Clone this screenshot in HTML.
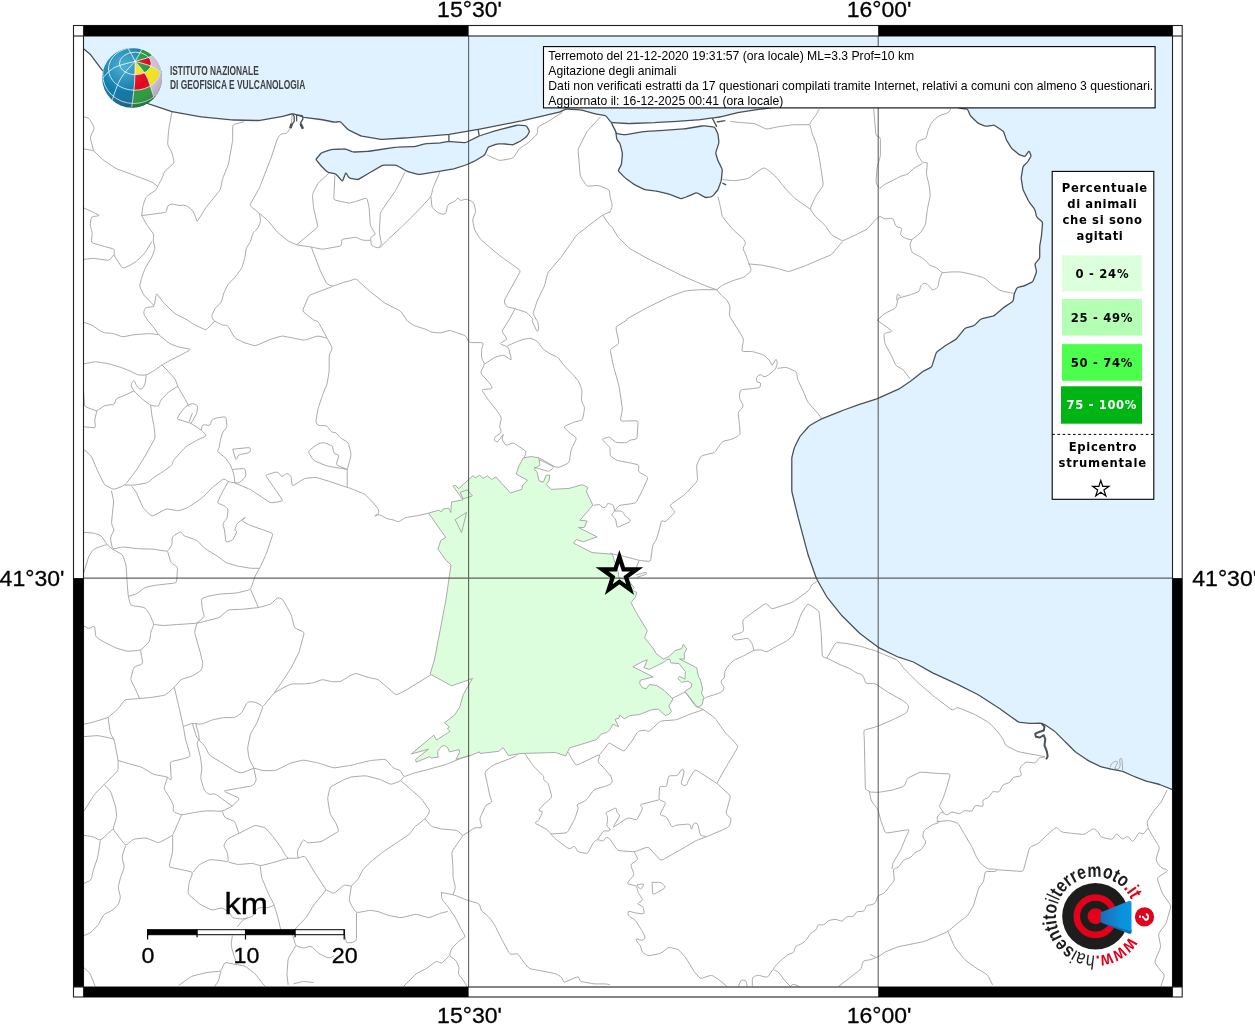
<!DOCTYPE html>
<html lang="it"><head><meta charset="utf-8"><title>Hai sentito il terremoto - Agitazione degli animali</title>
<style>html,body{margin:0;padding:0;background:#fff}body{width:1255px;height:1024px;overflow:hidden}svg{display:block;will-change:transform}text{font-family:"Liberation Sans",sans-serif;fill:#000}.dj{font-family:"DejaVu Sans",sans-serif;font-weight:bold}</style></head><body>
<svg width="1255" height="1024" viewBox="0 0 1255 1024">
<rect width="1255" height="1024" fill="#fff"/>
<defs><clipPath id="mapclip"><rect x="83.5" y="36" width="1089" height="951"/></clipPath><linearGradient id="bl" x1="0" x2="1" y1="0" y2="0"><stop offset="0" stop-color="#1c6cb4"/><stop offset="0.7" stop-color="#0a92dc"/><stop offset="1" stop-color="#0a96e0"/></linearGradient><radialGradient id="gl" cx="0.35" cy="0.3" r="0.75"><stop offset="0" stop-color="#2aa0c8"/><stop offset="0.6" stop-color="#0f79a8"/><stop offset="1" stop-color="#0a5c86"/></radialGradient><radialGradient id="gsh" cx="0.38" cy="0.3" r="0.8"><stop offset="0" stop-color="#fff" stop-opacity="0.18"/><stop offset="0.55" stop-color="#fff" stop-opacity="0"/><stop offset="1" stop-color="#000" stop-opacity="0.28"/></radialGradient><clipPath id="globeclip"><circle cx="132.3" cy="77.7" r="29.8"/></clipPath></defs>
<g clip-path="url(#mapclip)">
<path d="M83.5 36.0 L83.5 48.8 L90.2 54.2 L101.7 69.5 L120.0 88.0 L148.8 103.9 L171.8 111.6 L199.8 116.7 L233.0 120.0 L258.5 120.5 L281.4 116.7 L292.9 113.6 L304.4 117.5 L322.2 119.7 L335.0 122.3 L340.0 121.3 L347.7 129.4 L360.5 135.8 L380.9 139.4 L405.5 137.9 L447.6 134.6 L478.2 129.5 L520.2 121.1 L558.5 112.4 L566.1 109.1 L581.4 109.9 L596.7 114.2 L605.6 115.5 L611.2 122.5 L629.2 123.6 L656.1 122.5 L678.6 121.3 L698.8 119.8 L712.3 118.0 L721.2 116.8 L739.2 112.3 L761.7 109.0 L800.0 104.0 L880.0 100.0 L940.0 103.0 L962.8 108.8 L967.4 108.8 L970.3 115.6 L978.1 123.4 L986.0 126.4 L993.8 125.0 L1003.5 131.3 L1006.5 140.0 L1011.3 147.9 L1019.2 154.7 L1025.0 156.7 L1028.9 150.8 L1031.3 155.7 L1028.0 161.5 L1023.1 166.4 L1021.1 178.1 L1023.1 189.9 L1028.9 201.6 L1034.8 209.4 L1036.7 217.2 L1042.6 222.1 L1041.6 234.8 L1039.7 246.5 L1039.7 258.2 L1034.8 264.1 L1036.7 271.9 L1032.8 281.7 L1025.0 285.6 L1017.2 287.5 L1014.3 293.4 L1013.2 301.2 L1003.1 307.9 L994.2 315.7 L980.8 319.0 L974.1 325.7 L965.2 328.0 L956.3 339.1 L945.1 345.8 L936.2 352.5 L931.7 367.0 L922.8 371.5 L911.6 380.4 L900.5 388.2 L878.2 398.3 L858.1 404.9 L842.5 410.5 L820.2 419.4 L809.0 426.1 L800.1 436.2 L794.5 447.3 L791.8 457.4 L791.8 491.5 L798.7 519.7 L808.1 554.8 L816.3 578.2 L826.9 597.0 L840.9 614.6 L859.7 633.3 L878.4 647.4 L897.2 656.7 L913.4 662.0 L933.5 673.3 L955.8 683.5 L978.1 694.7 L1000.0 708.8 L1009.4 715.6 L1018.8 722.3 L1031.3 723.4 L1041.4 723.1 L1045.3 725.0 L1054.7 731.3 L1065.6 742.2 L1075.0 751.6 L1087.5 760.2 L1100.0 766.4 L1109.4 768.8 L1121.9 771.1 L1134.4 776.6 L1146.9 781.3 L1159.4 784.4 L1172.5 789.6 L1172.5 36.0Z" fill="#e0f2ff"/>
<path d="M315.8 159.5 L321.4 152.8 L331.5 149.4 L345.0 148.9 L353.5 152.1 L369.2 151.2 L396.1 147.2 L414.1 146.7 L425.3 143.8 L438.8 143.1 L448.9 141.5 L465.7 142.7 L479.2 135.9 L497.2 130.3 L517.4 125.1 L526.4 125.8 L529.7 131.4 L526.4 137.0 L519.6 141.5 L512.9 144.9 L503.9 143.8 L497.2 143.8 L488.2 147.2 L484.8 155.0 L474.7 161.1 L465.7 165.1 L452.3 169.2 L438.8 171.4 L418.6 174.5 L407.4 171.4 L396.1 165.1 L382.7 165.1 L369.2 173.0 L358.0 179.7 L349.0 178.0 L345.8 172.5 L342.5 181.5 L336.0 174.1 L327.0 171.9 L321.4 166.2Z" fill="#e0f2ff"/>
<path d="M611.2 122.5 L615.7 131.4 L616.8 133.7 L624.7 134.8 L644.9 131.4 L665.1 130.3 L685.3 128.7 L703.3 125.8 L714.5 126.9 L717.9 133.7 L719.0 142.7 L715.6 152.8 L717.9 160.6 L722.4 169.6 L721.2 180.8 L717.9 189.8 L712.3 196.5 L705.5 197.7 L696.6 192.5 L687.6 196.5 L680.8 198.8 L669.6 194.3 L656.1 190.9 L644.9 189.8 L633.7 184.2 L624.7 177.5 L618.0 170.7 L621.3 165.1 L622.5 153.9 L620.2 143.8 L616.8 139.3 L615.7 131.4Z" fill="#e0f2ff"/>
<path d="M428.6 513.1 L438.6 510.2 L441.5 511.7 L442.9 509.1 L448.7 508.1 L450.8 512.4 L451.6 501.9 L463.0 499.9 L453.0 486.1 L455.1 485.1 L458.7 488.7 L468.8 479.4 L473.1 475.5 L475.2 478.0 L479.5 475.1 L483.1 478.4 L487.4 475.8 L491.7 479.4 L496.0 477.0 L510.4 493.0 L521.8 489.4 L522.6 485.1 L527.6 480.4 L516.1 474.1 L519.0 465.8 L523.3 457.9 L531.2 456.5 L539.0 457.9 L539.8 465.1 L534.0 469.4 L536.9 471.5 L539.0 480.8 L543.3 482.3 L546.2 475.1 L549.8 475.1 L549.1 480.8 L546.2 484.4 L551.2 489.4 L569.2 488.4 L582.1 484.7 L587.8 487.3 L586.4 491.6 L592.8 505.2 L579.9 520.3 L587.1 521.0 L584.2 527.5 L578.5 527.5 L597.1 536.8 L583.5 541.8 L576.3 539.6 L573.5 543.2 L582.1 547.5 L592.1 552.6 L612.6 554.2 L613.7 558.7 L618.0 571.6 L619.1 578.0 L628.0 580.0 L634.1 587.7 L632.0 590.0 L636.8 592.5 L635.2 597.4 L630.9 602.7 L637.4 614.5 L640.8 620.0 L647.3 630.7 L644.6 637.7 L653.7 649.0 L655.9 653.3 L663.4 659.2 L668.8 656.5 L675.2 650.6 L681.7 648.5 L683.3 644.2 L686.8 649.0 L684.3 653.3 L684.3 659.2 L679.5 658.9 L696.7 667.8 L698.3 675.9 L700.5 680.2 L702.6 688.8 L701.5 693.1 L703.7 697.4 L702.1 704.9 L697.2 707.6 L694.5 704.9 L684.9 691.4 L691.3 687.1 L691.9 683.9 L688.1 681.2 L681.7 682.3 L677.9 678.6 L679.5 676.4 L684.9 679.1 L685.4 671.6 L679.0 663.5 L670.9 663.0 L669.8 659.2 L666.6 659.8 L664.5 661.9 L658.0 665.1 L649.4 669.4 L644.0 667.8 L647.3 659.8 L643.0 661.4 L632.8 666.7 L653.2 676.9 L640.3 680.2 L639.7 683.4 L642.4 687.7 L646.2 688.8 L649.4 684.5 L656.9 685.5 L664.5 690.9 L673.1 699.0 L668.8 705.9 L671.4 711.3 L668.8 714.5 L665.0 715.4 L658.6 709.2 L651.6 709.7 L639.7 714.5 L630.1 715.6 L624.2 718.8 L619.9 715.1 L618.8 718.3 L615.0 719.4 L618.8 726.9 L612.9 724.2 L609.7 730.0 L606.5 732.6 L601.4 733.9 L596.3 739.7 L569.6 747.9 L565.7 756.0 L555.5 752.5 L520.0 753.5 L508.5 755.6 L503.1 747.6 L498.8 751.3 L480.0 753.5 L479.5 751.9 L468.8 756.2 L455.9 759.4 L459.6 752.4 L459.1 749.7 L449.4 751.9 L447.8 748.1 L444.6 745.4 L441.4 746.5 L437.6 751.3 L438.1 757.2 L431.2 758.0 L429.5 756.7 L416.1 762.1 L415.6 759.4 L428.5 749.2 L411.3 754.0 L433.8 735.2 L436.5 740.0 L450.0 731.4 L447.3 728.8 L449.4 727.1 L444.6 722.8 L454.8 714.8 L459.6 707.3 L463.4 694.4 L468.8 684.7 L472.5 678.3 L468.8 679.9 L451.6 685.8 L430.1 674.0 L434.4 660.0 L442.1 620.0 L445.9 600.0 L448.4 582.8 L451.0 564.9 L445.8 560.0 L437.9 549.0 L440.8 540.4 L445.8 537.5Z" fill="#dcfedc"/>
<g fill="none" stroke="#a2a2a2" stroke-width="0.9" stroke-linejoin="round">
<path d="M428.6 513.1 L438.6 510.2 L441.5 511.7 L442.9 509.1 L448.7 508.1 L450.8 512.4 L451.6 501.9 L463.0 499.9 L453.0 486.1 L455.1 485.1 L458.7 488.7 L468.8 479.4 L473.1 475.5 L475.2 478.0 L479.5 475.1 L483.1 478.4 L487.4 475.8 L491.7 479.4 L496.0 477.0 L510.4 493.0 L521.8 489.4 L522.6 485.1 L527.6 480.4 L516.1 474.1 L519.0 465.8 L523.3 457.9 L531.2 456.5 L539.0 457.9 L539.8 465.1 L534.0 469.4 L536.9 471.5 L539.0 480.8 L543.3 482.3 L546.2 475.1 L549.8 475.1 L549.1 480.8 L546.2 484.4 L551.2 489.4 L569.2 488.4 L582.1 484.7 L587.8 487.3 L586.4 491.6 L592.8 505.2 L579.9 520.3 L587.1 521.0 L584.2 527.5 L578.5 527.5 L597.1 536.8 L583.5 541.8 L576.3 539.6 L573.5 543.2 L582.1 547.5 L592.1 552.6 L612.6 554.2 L613.7 558.7 L618.0 571.6 L619.1 578.0 L628.0 580.0 L634.1 587.7 L632.0 590.0 L636.8 592.5 L635.2 597.4 L630.9 602.7 L637.4 614.5 L640.8 620.0 L647.3 630.7 L644.6 637.7 L653.7 649.0 L655.9 653.3 L663.4 659.2 L668.8 656.5 L675.2 650.6 L681.7 648.5 L683.3 644.2 L686.8 649.0 L684.3 653.3 L684.3 659.2 L679.5 658.9 L696.7 667.8 L698.3 675.9 L700.5 680.2 L702.6 688.8 L701.5 693.1 L703.7 697.4 L702.1 704.9 L697.2 707.6 L694.5 704.9 L684.9 691.4 L691.3 687.1 L691.9 683.9 L688.1 681.2 L681.7 682.3 L677.9 678.6 L679.5 676.4 L684.9 679.1 L685.4 671.6 L679.0 663.5 L670.9 663.0 L669.8 659.2 L666.6 659.8 L664.5 661.9 L658.0 665.1 L649.4 669.4 L644.0 667.8 L647.3 659.8 L643.0 661.4 L632.8 666.7 L653.2 676.9 L640.3 680.2 L639.7 683.4 L642.4 687.7 L646.2 688.8 L649.4 684.5 L656.9 685.5 L664.5 690.9 L673.1 699.0 L668.8 705.9 L671.4 711.3 L668.8 714.5 L665.0 715.4 L658.6 709.2 L651.6 709.7 L639.7 714.5 L630.1 715.6 L624.2 718.8 L619.9 715.1 L618.8 718.3 L615.0 719.4 L618.8 726.9 L612.9 724.2 L609.7 730.0 L606.5 732.6 L601.4 733.9 L596.3 739.7 L569.6 747.9 L565.7 756.0 L555.5 752.5 L520.0 753.5 L508.5 755.6 L503.1 747.6 L498.8 751.3 L480.0 753.5 L479.5 751.9 L468.8 756.2 L455.9 759.4 L459.6 752.4 L459.1 749.7 L449.4 751.9 L447.8 748.1 L444.6 745.4 L441.4 746.5 L437.6 751.3 L438.1 757.2 L431.2 758.0 L429.5 756.7 L416.1 762.1 L415.6 759.4 L428.5 749.2 L411.3 754.0 L433.8 735.2 L436.5 740.0 L450.0 731.4 L447.3 728.8 L449.4 727.1 L444.6 722.8 L454.8 714.8 L459.6 707.3 L463.4 694.4 L468.8 684.7 L472.5 678.3 L468.8 679.9 L451.6 685.8 L430.1 674.0 L434.4 660.0 L442.1 620.0 L445.9 600.0 L448.4 582.8 L451.0 564.9 L445.8 560.0 L437.9 549.0 L440.8 540.4 L445.8 537.5Z"/>
<path d="M460.2 492.3 L467.3 489.9 L472.4 495.9 L463.0 498.8Z"/>
<path d="M455.1 519.6 L466.6 512.4 L461.6 532.5Z"/>
<path d="M172.1 111.2 L169.1 127.0 Q168.7 129.2 168.5 131.4 L167.7 142.7 Q167.6 144.9 168.7 146.8 L171.0 150.9 Q172.1 152.8 172.5 154.9 L173.8 160.7 Q174.3 162.9 172.7 164.3 L165.8 170.4 Q164.2 171.9 163.5 173.9 L162.7 176.5 Q162.0 178.6 160.9 180.5 L158.6 184.5 Q157.5 186.4 156.9 188.1 L156.9 188.1 Q156.3 189.8 154.5 191.0 L148.1 195.3 Q146.2 196.6 145.5 198.6 L143.6 203.5 Q142.9 205.5 142.6 207.7 L141.7 215.6"/>
<path d="M141.7 215.6 L164.3 212.6 Q166.4 212.3 166.8 210.1 L167.2 207.7 Q167.6 205.5 169.6 204.7 L170.0 204.6 Q172.1 203.7 174.2 204.3 L176.7 205.0 Q178.8 205.5 181.0 205.4 L183.3 205.2 Q185.5 205.1 187.3 206.4 L190.5 208.7 Q192.3 210.0 193.3 212.0 L194.7 214.8 Q195.6 216.8 196.1 218.9 L196.3 220.2 Q196.8 222.4 197.9 220.5 L204.6 209.7 Q205.7 207.8 207.1 206.1 L218.9 191.5 Q220.3 189.8 220.8 187.7 L222.1 180.7 Q222.6 178.6 223.4 176.6 L227.3 167.1 Q228.2 165.1 228.6 163.0 L232.3 142.6 Q232.7 140.4 232.7 138.2 L232.7 126.9 Q232.7 124.7 234.8 124.1 L243.9 121.8"/>
<path d="M83.4 148.9 L91.3 150.2 Q93.5 150.5 95.0 152.1 L100.9 157.9 Q102.5 159.5 104.3 160.7 L114.1 167.3 Q115.9 168.5 118.0 169.3 L131.8 174.4 Q133.9 175.2 135.9 176.0 L149.8 181.2 Q151.9 182.0 153.6 183.3 L157.5 186.4"/>
<path d="M83.4 116.8 L86.8 117.5 Q89.0 118.0 90.0 119.9 L93.5 126.1 Q94.6 128.1 93.6 130.0 L91.1 135.1 Q90.1 137.0 90.6 139.2 L93.5 150.5"/>
<path d="M141.7 215.6 L146.3 223.8 Q147.4 225.7 148.7 227.5 L152.8 233.0 Q154.1 234.7 153.7 236.9 L153.4 238.2 Q153.0 240.3 153.6 242.5 L154.6 246.1 Q155.2 248.2 154.4 250.3 L152.6 255.1 Q151.9 257.2 150.7 259.1 L146.2 266.5 Q145.1 268.4 144.3 270.5 L142.5 275.3 Q141.7 277.4 141.2 279.5 L140.0 284.2 Q139.5 286.4 140.5 288.3 L143.0 293.4 Q144.0 295.3 145.5 296.9 L150.3 301.7 Q151.9 303.2 153.0 304.9 L153.0 304.9 Q154.1 306.6 154.5 304.4 L156.0 295.3 Q156.3 293.1 157.7 294.9 L161.8 300.3 Q163.1 302.1 164.6 303.6 L172.8 311.8 Q174.3 313.3 176.3 314.3 L187.4 320.0"/>
<path d="M154.1 306.6 L147.3 307.4 Q145.1 307.7 144.4 309.8 L144.0 311.2 Q143.3 313.3 144.5 315.2 L147.4 320.0"/>
<path d="M83.4 207.8 L91.5 211.4 Q93.5 212.3 95.4 213.3 L98.2 214.7 Q100.2 215.6 98.0 215.9 L93.4 216.5 Q91.2 216.8 91.0 218.9 L90.4 223.6 Q90.1 225.7 90.8 227.8 L91.7 230.4 Q92.3 232.5 92.1 234.7 L91.5 240.4 Q91.2 242.6 93.3 243.2 L100.3 245.3 Q102.5 245.9 104.6 246.5 L112.7 248.7 Q114.8 249.3 114.4 251.5 L114.1 252.8 Q113.7 254.9 114.9 256.8 L121.4 266.6 Q122.7 268.4 124.7 267.6 L126.2 267.0 Q128.3 266.2 130.2 265.1 L134.2 262.8 Q136.1 261.7 137.7 260.1 L143.6 254.2 Q145.1 252.7 146.2 250.8 L151.9 241.5"/>
<path d="M83.4 259.4 L91.3 258.5 Q93.5 258.3 95.7 258.6 L107.0 260.2 Q109.2 260.5 110.6 258.8 L113.7 254.9"/>
<path d="M292.2 114.6 L291.3 124.8 Q291.1 126.9 289.8 128.8 L287.8 131.9 Q286.6 133.7 284.4 133.7 L283.2 133.7 Q281.0 133.7 279.6 135.4 L278.9 136.4 Q277.6 138.2 276.9 140.3 L271.6 156.3 Q270.9 158.4 270.1 160.4 L260.4 185.5 Q259.6 187.6 258.6 189.5 L250.6 203.6 Q249.5 205.5 251.3 206.9 L257.9 212.0 Q259.6 213.4 259.9 215.6 L260.4 219.1 Q260.8 221.3 259.9 223.3 L258.3 227.1 Q257.4 229.1 255.6 230.4 L254.7 231.2 Q252.9 232.5 252.4 234.6 L251.2 239.3 Q250.6 241.5 249.4 243.3 L247.4 246.4 Q246.2 248.2 245.9 250.4 L245.3 255.0 Q245.0 257.2 244.4 259.3 L242.3 266.3 Q241.7 268.4 240.3 270.2 L236.3 275.6 Q234.9 277.4 233.4 278.9 L229.8 282.6 Q228.2 284.1 227.2 286.1 L224.7 291.1 Q223.7 293.1 223.2 295.2 L222.0 299.9 Q221.5 302.1 219.9 303.6 L216.3 307.3 Q214.7 308.8 213.9 310.8 L212.2 314.7 Q211.4 316.7 212.5 318.3 L213.6 320.0"/>
<path d="M259.6 213.4 L267.0 219.8 Q268.6 221.3 270.0 223.0 L276.2 230.8 Q277.6 232.5 279.3 233.9 L287.1 240.1 Q288.8 241.5 290.8 242.3 L294.7 244.0 Q296.7 244.8 298.9 245.2 L309.1 246.7 Q311.3 247.1 313.4 247.5 L320.3 248.9 Q322.5 249.3 324.7 248.9 L339.4 246.3 Q341.6 245.9 341.6 243.7 L341.6 241.4 Q341.6 239.2 343.8 238.9 L350.0 238.1"/>
<path d="M296.7 244.8 L316.3 228.3 Q318.0 226.9 317.5 224.7 L314.0 209.9 Q313.5 207.8 313.3 205.6 L312.6 196.5 Q312.4 194.3 313.4 192.3 L317.0 185.0 Q318.0 183.1 319.6 181.6 L329.2 173.0"/>
<path d="M334.9 175.2 L333.8 197.7 Q333.7 199.9 335.9 200.4 L347.3 202.8 Q349.4 203.3 349.7 203.0 L350.0 202.8"/>
<path d="M311.3 247.1 L319.5 268.6 Q320.3 270.6 321.2 272.6 L326.0 282.2 Q327.0 284.1 329.0 284.9 L330.6 285.5 Q332.6 286.4 334.7 285.6 L342.9 282.6 Q345.0 281.9 347.1 281.4 L350.0 280.9"/>
<path d="M332.6 286.4 L311.1 294.6 Q309.0 295.3 308.2 297.4 L303.2 309.0 Q302.3 311.1 304.0 312.4 L313.5 320.0"/>
<path d="M405.1 171.9 L397.1 187.8 Q396.1 189.8 394.9 191.6 L381.7 210.5 Q380.4 212.3 380.3 214.5 L379.4 230.3 Q379.3 232.5 379.7 234.6 L381.1 241.5 Q381.5 243.7 380.6 245.7 L380.3 246.2 Q379.3 248.2 377.2 247.6 L373.6 246.6 Q371.4 245.9 371.2 243.8 L370.6 239.2 Q370.3 237.0 372.4 236.2 L373.9 235.5 Q375.9 234.7 374.8 232.9 L371.5 227.6 Q370.3 225.7 370.2 223.5 L369.3 210.0 Q369.2 207.8 368.7 205.6 L367.4 199.8 Q366.9 197.7 364.9 198.4 L355.6 201.5 Q353.5 202.2 351.7 202.5 L350.0 202.8"/>
<path d="M350.0 238.1 L353.6 237.4 Q355.7 237.0 357.7 238.0 L360.5 239.4 Q362.5 240.3 364.7 240.3 L370.3 240.3"/>
<path d="M379.3 248.2 L386.7 240.8 Q388.3 239.2 389.9 237.7 L401.3 227.2 Q402.9 225.7 404.4 224.2 L417.0 211.6 Q418.6 210.0 420.1 208.4 L429.5 198.2 Q430.9 196.6 431.5 194.4 L432.6 189.7 Q433.2 187.6 434.0 185.5 L439.9 171.9"/>
<path d="M430.9 196.6 L431.8 205.6 Q432.1 207.8 433.8 209.2 L437.1 212.0 Q438.8 213.4 441.0 213.8 L443.4 214.2 Q445.5 214.5 446.0 212.4 L447.3 206.6 Q447.8 204.4 449.8 203.5 L453.6 201.9 Q455.6 201.0 456.7 199.1 L456.8 198.9 Q457.9 197.0 459.0 198.9 L459.1 199.1 Q460.1 201.0 462.2 200.2 L463.7 199.6 Q465.7 198.8 467.8 199.7 L471.6 201.3 Q473.6 202.2 474.1 204.3 L475.3 209.0 Q475.8 211.1 475.1 213.2 L473.2 218.1 Q472.5 220.1 473.0 222.3 L474.2 228.1 Q474.7 230.2 475.9 232.1 L479.2 237.3 Q480.3 239.2 482.0 240.6 L486.5 244.5 Q488.2 245.9 489.9 247.4 L500.0 255.8 Q501.7 257.2 503.5 258.4 L519.0 269.4 Q520.8 270.6 519.7 272.6 L505.0 299.0 Q503.9 301.0 504.7 303.0 L505.3 304.5 Q506.2 306.6 508.3 307.1 L513.0 308.3 Q515.1 308.8 517.2 309.5 L524.3 311.6 Q526.4 312.2 527.9 313.7 L531.5 317.4 Q533.1 318.9 532.6 319.5 L532.1 320.0"/>
<path d="M515.1 308.8 L509.0 320.0"/>
<path d="M533.1 313.3 L536.9 301.9 Q537.6 299.8 538.6 297.9 L543.3 288.3 Q544.3 286.4 544.9 284.2 L547.2 275.0 Q547.7 272.9 549.1 271.2 L559.7 258.8 Q561.2 257.2 562.4 255.4 L575.6 236.5 Q576.9 234.7 578.6 233.4 L601.0 216.3 Q602.7 215.0 604.7 214.1 L610.0 211.9"/>
<path d="M610.0 196.2 L609.6 192.0 Q609.4 189.8 607.4 189.0 L600.3 186.1 Q598.2 185.3 596.0 185.5 L589.2 186.2 Q587.0 186.4 585.8 184.6 L581.5 178.2 Q580.3 176.3 580.1 174.2 L578.2 151.6 Q578.0 149.4 579.0 147.4 L586.0 133.4 Q587.0 131.4 588.5 129.8 L600.5 116.8"/>
<path d="M602.7 215.0 L610.0 225.7"/>
<path d="M533.1 313.3 L536.4 320.0"/>
<path d="M350.0 280.9 L353.7 279.3 Q355.7 278.5 357.3 280.0 L367.6 289.4 Q369.2 290.9 370.9 292.2 L383.2 301.8 Q384.9 303.2 386.9 304.2 L398.7 310.1 Q400.6 311.1 401.9 312.9 L406.7 320.0"/>
<path d="M487.1 155.0 L497.4 159.7 Q499.4 160.6 501.6 160.3 L510.7 158.7 Q512.9 158.4 514.1 156.5 L518.4 150.1 Q519.6 148.3 521.5 147.1 L526.7 143.8 Q528.6 142.7 530.2 141.1 L536.0 135.2 Q537.6 133.7 537.6 131.5 L537.6 129.1 Q537.6 126.9 539.6 126.0 L544.6 123.4 Q546.6 122.5 548.4 121.3 L562.3 112.3"/>
<path d="M730.2 121.3 L737.0 122.2 Q739.2 122.5 741.4 122.6 L752.7 123.4 Q754.9 123.6 756.9 124.6 L764.2 128.2 Q766.2 129.2 768.3 128.8 L775.2 127.4 Q777.4 126.9 779.6 126.6 L790.9 125.0 Q793.1 124.7 795.3 124.7 L807.7 124.7 Q809.9 124.7 810.5 123.0 L810.5 123.0 Q811.1 121.3 812.4 119.6 L814.2 117.4 Q815.6 115.7 816.6 113.8 L818.9 109.4"/>
<path d="M809.9 124.7 L811.7 131.5 Q812.2 133.7 813.0 135.7 L815.9 142.9 Q816.7 144.9 817.1 147.1 L818.5 154.0 Q818.9 156.1 819.3 158.3 L820.8 167.4 Q821.2 169.6 821.5 171.8 L823.1 183.1 Q823.4 185.3 822.2 187.1 L816.8 194.7 Q815.6 196.6 814.6 198.6 L810.9 206.9 Q809.9 208.9 811.2 210.7 L814.3 215.0 Q815.6 216.8 817.2 218.2 L822.9 223.2 Q824.5 224.6 825.8 226.4 L830.1 232.9 Q831.3 234.7 833.2 235.8 L840.6 239.9 Q842.5 241.0 844.5 240.1 L854.0 235.7 Q856.0 234.7 857.9 233.7 L865.2 230.1 Q867.2 229.1 868.7 227.5 L874.7 220.6 Q876.2 219.0 878.0 217.8 L880.0 216.4"/>
<path d="M722.4 179.7 L732.5 180.6 Q734.7 180.8 736.9 180.5 L746.0 178.9 Q748.2 178.6 750.0 177.3 L755.4 173.2 Q757.2 171.9 759.0 170.6 L762.1 168.6 Q763.9 167.4 765.7 168.6 L768.8 170.6 Q770.6 171.9 772.2 173.4 L775.8 177.0 Q777.4 178.6 778.8 180.3 L785.0 188.1 Q786.4 189.8 787.9 191.4 L793.8 197.2 Q795.3 198.8 797.2 200.0 L809.9 208.9"/>
<path d="M717.9 196.6 L719.6 203.4 Q720.1 205.5 720.6 207.7 L721.9 214.6 Q722.4 216.8 723.8 218.5 L731.1 227.4 Q732.5 229.1 734.1 230.6 L742.1 237.7 Q743.7 239.2 744.7 241.2 L745.0 241.7 Q745.9 243.7 744.6 245.5 L743.9 246.4 Q742.6 248.2 743.6 250.2 L745.0 253.0 Q745.9 254.9 746.6 257.0 L747.5 259.6 Q748.2 261.7 749.0 263.7 L750.8 268.6 Q751.6 270.6 749.9 272.1 L745.4 276.0 Q743.7 277.4 741.6 278.0 L734.6 280.1 Q732.5 280.8 730.5 281.6 L724.4 284.3 Q722.4 285.2 720.7 286.6 L716.8 289.7"/>
<path d="M748.2 263.9 L759.5 264.9 Q761.7 265.0 763.8 265.5 L775.2 267.9 Q777.4 268.4 779.5 269.0 L786.5 271.1 Q788.6 271.8 790.7 271.0 L802.3 266.9 Q804.3 266.2 806.4 265.3 L818.0 260.3 Q820.0 259.4 822.1 258.6 L829.2 255.7 Q831.3 254.9 832.7 253.2 L842.5 241.5"/>
<path d="M610.0 196.2 L611.8 203.4 Q612.3 205.5 611.7 207.6 L610.8 210.2 Q610.1 212.3 610.1 212.1 L610.0 211.9"/>
<path d="M610.0 225.7 L610.6 225.7 Q611.2 225.7 612.4 227.6 L616.8 235.1 Q618.0 237.0 619.5 238.5 L627.6 246.6 Q629.2 248.2 631.1 249.3 L643.0 256.1 Q644.9 257.2 646.9 258.2 L660.9 265.2 Q662.9 266.2 664.8 267.1 L678.9 274.2 Q680.8 275.1 682.8 276.0 L696.8 282.1 Q698.8 283.0 700.8 283.8 L708.0 286.7 Q710.0 287.5 712.1 288.2 L716.8 289.7"/>
<path d="M716.8 289.7 L719.9 293.6 Q721.3 295.3 723.0 296.7 L725.1 298.5 Q726.9 299.8 727.8 301.8 L729.2 304.6 Q730.2 306.6 730.0 308.8 L729.4 313.4 Q729.1 315.6 730.3 317.4 L732.0 320.0"/>
<path d="M716.8 289.7 L701.0 289.7 Q698.8 289.7 696.6 289.9 L687.5 290.7 Q685.3 290.9 683.3 291.6 L669.4 296.8 Q667.4 297.6 665.4 298.6 L646.9 307.8 Q644.9 308.8 643.0 309.9 L628.9 317.8 Q626.9 318.9 627.0 319.5 L627.1 320.0"/>
<path d="M950.8 108.8 L949.8 110.7 Q948.8 112.7 946.7 113.3 L941.2 115.0 Q939.1 115.6 937.4 117.1 L933.9 120.1 Q932.2 121.5 931.2 123.5 L929.3 127.3 Q928.3 129.3 927.8 131.5 L926.8 135.9 Q926.4 138.1 924.3 138.8 L919.7 140.3 Q917.6 141.0 917.0 143.2 L916.2 146.7 Q915.6 148.8 916.4 150.9 L917.8 154.6 Q918.6 156.7 919.8 158.5 L921.2 160.7 Q922.5 162.5 924.7 162.7 L927.3 162.9"/>
<path d="M927.3 162.9 L926.6 172.0 Q926.4 174.2 926.9 176.4 L928.8 183.8 Q929.3 186.0 929.5 188.1 L930.1 193.5 Q930.3 195.7 929.8 197.9 L927.8 207.2 Q927.3 209.4 927.1 211.6 L925.7 222.8 Q925.4 225.0 924.2 226.9 L921.7 231.0 Q920.5 232.8 918.8 234.2 L911.7 239.7"/>
<path d="M900.0 176.5 L905.7 174.8 Q907.8 174.2 909.4 172.7 L912.1 169.9 Q913.7 168.4 915.6 167.3 L922.5 163.5"/>
<path d="M911.7 239.7 L910.6 242.5 Q909.8 244.6 910.3 246.7 L911.2 250.2 Q911.7 252.4 913.7 253.4 L917.6 255.3 Q919.5 256.3 921.4 257.5 L923.6 259.0 Q925.4 260.2 926.8 261.9 L927.9 263.4 Q929.3 265.1 931.4 265.8 L935.1 267.2 Q937.1 268.0 938.7 269.6 L940.4 271.3 Q942.0 272.9 944.2 272.6 L948.6 272.2 Q950.8 271.9 953.0 271.9 L958.4 271.9 Q960.6 271.9 962.7 272.4 L972.1 274.4 Q974.2 274.8 976.3 275.5 L981.9 277.1 Q984.0 277.8 985.7 279.2 L990.2 283.2 Q991.8 284.6 993.6 285.9 L997.9 289.1 Q999.6 290.5 1001.8 290.9 L1006.3 291.9 Q1008.4 292.4 1010.6 292.8 L1014.3 293.4"/>
<path d="M942.0 272.9 L939.9 277.7 Q939.1 279.7 938.8 281.9 L938.4 285.4 Q938.1 287.5 936.1 288.5 L934.2 289.5 Q932.2 290.5 931.1 288.6 L930.4 287.5 Q929.3 285.6 927.4 284.5 L926.3 283.8 Q924.4 282.7 922.7 284.0 L922.3 284.3 Q920.5 285.6 920.2 287.8 L919.9 289.3 Q919.5 291.4 917.5 292.2 L913.8 293.6 Q911.7 294.4 909.6 295.0 L898.3 298.2"/>
<path d="M900.0 227.4 L901.0 228.2 Q902.0 228.9 901.3 231.0 L900.7 232.7 Q900.0 234.8 901.8 236.0 L904.0 237.5 Q905.9 238.7 908.0 239.1 L911.7 239.7"/>
<path d="M147.4 320.0 L152.7 326.3 Q154.1 328.0 155.3 329.8 L157.4 332.9 Q158.6 334.7 160.3 336.1 L168.1 342.3 Q169.8 343.7 171.9 344.5 L176.7 346.3 Q178.8 347.0 181.0 347.4 L189.0 348.9 Q191.1 349.3 189.2 350.4 L183.0 353.8 Q181.0 354.9 179.1 355.9 L171.8 359.5 Q169.8 360.5 167.9 361.6 L163.9 363.9 Q162.0 365.0 160.2 366.3 L155.9 369.3 Q154.1 370.6 152.2 371.7 L148.1 374.0 Q146.2 375.1 144.0 375.1 L140.6 375.1 Q138.4 375.1 136.4 374.1 L131.4 371.6 Q129.4 370.6 127.3 369.9 L122.5 368.0 Q120.4 367.3 118.3 366.6 L111.3 364.5 Q109.2 363.9 107.0 363.5 L97.9 362.0 Q95.7 361.6 93.6 362.0 L83.4 363.9"/>
<path d="M83.4 322.3 L89.1 324.0 Q91.2 324.6 93.0 325.9 L100.7 331.2 Q102.5 332.5 104.6 332.7 L111.5 333.4 Q113.7 333.6 115.7 334.3 L120.6 336.2 Q122.7 336.9 124.8 336.5 L131.7 335.1 Q133.9 334.7 136.1 334.5 L147.4 333.7 Q149.6 333.6 151.8 333.8 L158.6 334.7"/>
<path d="M162.0 365.0 L168.3 371.3 Q169.8 372.9 171.2 374.6 L174.0 377.9 Q175.4 379.6 176.1 381.7 L177.0 384.3 Q177.7 386.3 178.8 388.2 L184.4 397.9 Q185.5 399.8 186.5 401.8 L188.9 406.6"/>
<path d="M146.2 375.1 L145.4 381.9 Q145.1 384.1 144.0 386.0 L142.9 387.8 Q141.7 389.7 139.8 388.7 L139.2 388.4 Q137.3 387.5 136.4 385.4 L134.8 381.6 Q133.9 379.6 132.8 381.5 L131.7 383.3 Q130.5 385.2 131.7 387.1 L132.8 388.9 Q133.9 390.8 135.4 392.4 L140.2 397.1 Q141.7 398.7 143.5 400.0 L149.0 404.1 Q150.7 405.4 152.9 405.7 L156.4 406.2 Q158.6 406.6 159.3 404.5 L160.1 401.9 Q160.8 399.8 162.4 398.3 L167.1 393.5 Q168.7 392.0 170.6 390.8 L177.7 386.3"/>
<path d="M133.9 390.8 L126.9 394.3 Q124.9 395.3 122.8 396.1 L118.0 397.9 Q115.9 398.7 115.5 400.8 L115.2 402.1 Q114.8 404.3 112.6 404.5 L106.9 405.2 Q104.7 405.4 102.9 406.7 L98.6 409.8 Q96.8 411.0 94.8 410.3 L86.6 407.3 Q84.5 406.6 84.4 404.4 L83.4 388.6"/>
<path d="M96.8 411.0 L95.1 417.9 Q94.6 420.0 94.9 422.2 L95.4 425.7 Q95.7 427.9 93.5 427.7 L83.4 426.8"/>
<path d="M150.7 405.4 L151.6 413.3 Q151.9 415.5 152.3 417.7 L153.7 424.6 Q154.1 426.8 154.3 428.9 L155.0 435.8 Q155.2 438.0 154.1 439.9 L146.2 454.0 Q145.1 455.9 144.0 457.8 L137.3 468.7 Q136.1 470.5 134.8 472.3 L126.2 483.4 Q124.9 485.1 122.9 486.0 L115.7 488.8 Q113.7 489.6 111.7 488.6 L106.7 486.1 Q104.7 485.1 103.7 483.2 L98.9 473.6 Q98.0 471.7 97.1 469.6 L92.1 458.0 Q91.2 455.9 89.6 454.5 L83.4 449.2"/>
<path d="M124.9 485.1 L131.7 485.1 Q133.9 485.1 136.1 484.8 L145.2 483.3 Q147.4 482.9 149.1 481.5 L152.4 478.7 Q154.1 477.3 156.0 476.1 L161.2 472.8 Q163.1 471.7 164.8 470.3 L170.3 466.3 Q172.1 464.9 172.6 462.8 L172.6 462.6 Q173.2 460.4 174.7 458.8 L184.0 448.6 Q185.5 447.0 187.4 445.8 L194.9 441.4 Q196.8 440.2 198.8 439.3 L204.9 436.6 Q206.9 435.7 205.3 434.2 L202.8 431.7 Q201.3 430.1 199.4 428.9 L193.0 424.6 Q191.1 423.4 189.0 422.7 L178.7 419.5 Q176.6 418.9 177.8 417.1 L179.8 414.0 Q181.0 412.2 182.4 410.4 L184.2 408.3 Q185.5 406.6 187.5 405.6 L190.3 404.2 Q192.3 403.2 194.3 404.0 L195.8 404.6 Q197.9 405.4 197.6 407.6 L197.1 411.1 Q196.8 413.3 195.7 415.2 L191.1 423.4"/>
<path d="M192.3 413.3 L188.9 422.3"/>
<path d="M201.3 430.1 L201.9 426.7 Q202.4 424.5 204.6 424.8 L208.1 425.3 Q210.2 425.6 210.7 423.5 L210.9 422.2 Q211.4 420.0 213.4 419.2 L214.9 418.6 Q217.0 417.8 219.2 417.5 L223.8 416.9 Q225.9 416.7 226.2 418.8 L226.8 424.6 Q227.1 426.8 225.7 428.5 L224.0 430.7 Q222.6 432.4 222.0 434.5 L220.9 438.1 Q220.3 440.2 220.0 442.4 L219.5 445.9 Q219.2 448.1 218.1 449.8 L218.1 449.8 Q217.0 451.5 218.8 452.7 L223.0 455.8 Q224.8 457.1 226.1 458.9 L229.2 463.1 Q230.4 464.9 231.2 467.0 L233.0 471.9 Q233.8 473.9 234.1 476.1 L234.9 482.9"/>
<path d="M234.9 482.9 L230.4 482.1 Q228.2 481.8 226.4 480.5 L225.5 479.7 Q223.7 478.4 222.0 479.8 L214.2 486.0 Q212.5 487.4 210.9 488.9 L202.8 497.1 Q201.3 498.6 199.4 499.8 L189.6 506.4 Q187.8 507.6 185.7 508.4 L180.9 510.2 Q178.8 511.0 176.6 510.6 L168.6 509.1 Q166.4 508.7 164.5 509.8 L153.8 515.5 Q151.9 516.6 150.3 515.0 L144.4 509.1 Q142.9 507.6 142.0 505.6 L137.0 493.9 Q136.1 491.9 134.8 490.2 L131.6 486.3"/>
<path d="M228.2 481.8 L224.8 487.7 Q223.7 489.6 222.7 491.6 L218.0 501.1 Q217.0 503.1 219.1 503.8 L221.6 504.7 Q223.7 505.3 225.5 506.7 L226.4 507.4 Q228.2 508.7 228.0 510.9 L227.3 516.6 Q227.1 518.8 225.5 520.4 L224.1 521.8 Q222.6 523.3 223.2 525.4 L224.5 530.0"/>
<path d="M234.9 482.9 L248.6 488.8 Q250.6 489.6 252.5 490.9 L269.0 501.9 Q270.9 503.1 273.0 502.7 L281.0 501.3 Q283.2 500.9 281.9 499.1 L276.6 491.4 Q275.3 489.6 274.1 487.8 L266.5 476.8 Q265.2 475.0 267.4 474.5 L275.5 472.2 Q277.6 471.7 279.0 473.4 L280.7 475.6 Q282.1 477.3 283.6 475.7 L285.0 474.3 Q286.6 472.8 288.3 474.1 L289.3 474.8 Q291.1 476.2 291.3 478.3 L291.9 484.1 Q292.2 486.3 294.0 485.1 L302.7 479.6 Q304.5 478.4 306.7 478.2 L313.6 477.5 Q315.8 477.3 317.9 477.9 L324.9 480.0 Q327.0 480.6 329.1 481.3 L345.1 486.7 Q347.2 487.4 348.6 487.8 L350.0 488.1"/>
<path d="M347.2 487.4 L347.2 471.6 Q347.2 469.4 347.8 467.3 L350.0 459.5"/>
<path d="M350.0 449.7 L348.8 444.6 Q348.3 442.5 346.4 441.4 L342.4 439.1 Q340.5 438.0 339.1 436.3 L337.3 434.1 Q336.0 432.4 333.8 432.4 L333.7 432.4 Q331.5 432.4 330.3 430.5 L328.2 427.5 Q327.0 425.6 324.8 425.6 L320.2 425.6 Q318.0 425.6 316.9 424.0 L316.9 424.0 Q315.8 422.3 316.1 420.1 L317.6 411.0 Q318.0 408.8 318.7 406.7 L321.8 397.4 Q322.5 395.3 323.3 393.3 L326.2 386.1 Q327.0 384.1 327.4 381.9 L328.9 372.8 Q329.2 370.6 329.2 368.4 L329.2 357.1 Q329.2 354.9 330.2 352.9 L331.6 350.1 Q332.6 348.2 331.5 346.2 L328.1 340.0 Q327.0 338.1 326.0 336.1 L319.0 323.2 Q318.0 321.2 315.9 320.7 L313.5 320.0"/>
<path d="M327.0 338.1 L320.1 336.4 Q318.0 335.8 315.9 336.5 L306.6 339.6 Q304.5 340.3 302.4 339.9 L284.2 336.3 Q282.1 335.8 280.0 336.5 L273.0 338.6 Q270.9 339.2 268.8 340.1 L257.2 345.1 Q255.1 345.9 253.0 345.3 L246.0 343.2 Q243.9 342.6 241.9 341.6 L236.9 339.1 Q234.9 338.1 233.8 336.2 L228.2 326.5 Q227.1 324.6 225.4 325.2 L225.4 325.2 Q223.7 325.7 221.7 324.7 L216.7 322.2 Q214.7 321.2 214.1 320.6 L213.6 320.0"/>
<path d="M214.7 321.2 L207.3 328.7 Q205.7 330.2 203.8 329.2 L194.2 324.5 Q192.3 323.5 190.5 322.2 L187.4 320.0"/>
<path d="M347.2 469.4 L338.0 465.7 Q336.0 464.9 336.7 462.8 L338.6 456.9 Q339.3 454.8 337.2 454.4 L335.9 454.1 Q333.7 453.7 333.4 451.5 L332.9 448.0 Q332.6 445.8 330.5 445.1 L325.7 443.2 Q323.6 442.5 321.5 442.9 L320.2 443.2 Q318.0 443.6 316.3 445.0 L309.6 450.1 Q307.9 451.5 309.1 453.3 L312.4 458.6 Q313.5 460.4 315.5 461.3 L325.0 465.2 Q327.0 466.1 329.2 466.4 L347.2 469.4"/>
<path d="M232.7 449.2 L248.5 447.6 Q250.6 447.4 250.5 449.6 L250.4 450.4 Q250.2 452.6 248.0 453.0 L240.5 454.4 Q238.3 454.8 237.5 456.9 L236.9 458.4 Q236.1 460.4 235.4 458.3 L232.7 449.2"/>
<path d="M232.7 469.4 L242.8 468.5 Q245.0 468.3 245.3 470.5 L245.8 474.0 Q246.2 476.2 244.6 477.7 L241.0 481.3 Q239.4 482.9 237.2 482.9 L234.9 482.9"/>
<path d="M111.4 490.8 L113.2 498.7 Q113.7 500.9 113.5 503.0 L112.8 509.9 Q112.6 512.1 112.3 514.3 L111.7 521.1 Q111.4 523.3 112.2 525.4 L114.0 530.0"/>
<path d="M234.7 530.0 L236.4 525.4 Q237.2 523.3 238.9 522.0 L244.4 517.9 Q246.2 516.6 244.6 518.1 L243.2 519.5 Q241.7 521.1 243.6 522.0 L248.7 524.6 Q250.6 525.6 252.7 526.3 L263.7 530.0"/>
<path d="M406.7 320.0 L407.0 320.6 Q407.4 321.2 409.2 322.4 L412.3 324.5 Q414.1 325.7 416.2 326.3 L423.2 328.5 Q425.3 329.1 427.3 330.1 L430.1 331.5 Q432.1 332.5 434.3 332.6 L438.8 332.8 Q441.0 332.9 443.1 332.3 L447.9 330.8 Q450.0 330.2 452.1 331.0 L456.9 332.8 Q459.0 333.6 461.1 334.3 L463.7 335.1 Q465.7 335.8 466.7 337.8 L468.1 340.6 Q469.1 342.6 471.3 342.6 L481.5 342.6 Q483.7 342.6 483.0 344.6 L482.2 347.2 Q481.5 349.3 481.5 351.5 L481.5 356.1 Q481.5 358.3 482.6 360.2 L483.7 362.0 Q484.8 363.9 483.8 365.9 L481.3 370.9 Q480.3 372.9 481.8 374.5 L489.0 382.5 Q490.4 384.1 491.4 386.1 L491.7 386.6 Q492.7 388.6 490.5 388.8 L483.6 389.5 Q481.5 389.7 482.7 391.5 L487.0 398.0 Q488.2 399.8 489.6 401.5 L495.8 409.3 Q497.2 411.0 498.4 412.9 L500.4 415.9 Q501.7 417.8 501.1 419.9 L500.0 424.6 Q499.4 426.8 500.2 428.8 L500.8 430.3 Q501.7 432.4 499.8 433.6 L496.8 435.6 Q494.9 436.9 494.4 438.5 L494.4 438.5 Q493.8 440.2 495.5 441.4 L495.5 441.4 Q497.2 442.5 498.5 440.7 L502.6 435.3 Q503.9 433.5 503.1 435.5 L502.5 437.1 Q501.7 439.1 502.9 440.9 L504.9 444.0 Q506.2 445.8 508.1 444.9 L510.9 443.5 Q512.9 442.5 514.7 443.7 L517.8 445.7 Q519.6 447.0 521.5 448.2 L524.5 450.2 Q526.4 451.5 525.7 453.5 L524.1 458.2"/>
<path d="M484.8 363.9 L493.1 358.4 Q494.9 357.2 497.1 356.6 L501.8 355.4 Q503.9 354.9 505.7 356.2 L510.0 359.2 Q511.8 360.5 511.2 358.4 L508.9 349.2 Q508.4 347.0 506.3 346.3 L501.5 344.5 Q499.4 343.7 501.3 342.6 L505.4 340.3 Q507.3 339.2 506.0 337.4 L502.9 333.1 Q501.7 331.3 502.9 329.5 L509.0 320.0"/>
<path d="M507.3 345.9 L515.4 342.3 Q517.4 341.4 519.5 340.7 L522.0 339.9 Q524.1 339.2 526.3 338.8 L528.7 338.4 Q530.9 338.1 532.8 339.1 L535.6 340.5 Q537.6 341.4 538.9 343.2 L541.9 347.5 Q543.2 349.3 545.0 350.5 L548.1 352.6 Q549.9 353.8 552.0 354.7 L555.8 356.3 Q557.8 357.2 559.1 358.9 L563.2 364.4 Q564.5 366.1 566.1 367.7 L572.0 373.6 Q573.5 375.1 574.9 376.8 L577.7 380.2 Q579.1 381.9 579.8 383.9 L581.4 388.7 Q582.1 390.8 581.9 393.0 L581.5 398.7 Q581.4 400.9 582.4 402.9 L583.8 405.7 Q584.7 407.7 584.4 409.8 L582.9 417.9 Q582.5 420.0 580.4 420.6 L575.7 421.7 Q573.5 422.3 571.5 423.2 L565.4 425.9 Q563.4 426.8 565.0 428.3 L567.5 430.8 Q569.0 432.4 570.8 433.7 L575.1 436.7 Q576.9 438.0 575.9 440.0 L572.3 447.2 Q571.3 449.2 570.9 451.4 L569.4 460.5 Q569.0 462.7 567.1 463.7 L562.0 466.2 Q560.0 467.2 557.8 467.2 L557.8 467.2 Q555.6 467.2 553.6 466.1 L539.8 458.2"/>
<path d="M536.4 320.0 L537.0 320.6 Q537.6 321.2 538.0 323.4 L538.4 325.8 Q538.7 328.0 538.2 330.1 L538.1 330.3 Q537.6 332.5 536.6 330.5 L534.1 325.4 Q533.1 323.5 532.6 321.7 L532.1 320.0"/>
<path d="M350.0 449.7 L350.6 451.7 Q351.2 453.7 350.8 455.9 L350.0 459.5"/>
<path d="M350.0 488.1 L351.7 488.9 Q353.5 489.6 355.5 490.4 L362.7 493.3 Q364.7 494.1 366.3 495.7 L369.9 499.3 Q371.4 500.9 372.9 502.5 L376.7 507.0 Q378.2 508.7 378.7 510.8 L378.8 511.1 Q379.3 513.2 377.4 514.3 L375.6 515.4 Q373.7 516.6 375.7 515.8 L377.3 515.1 Q379.3 514.3 381.2 515.4 L385.2 517.7 Q387.2 518.8 389.3 519.2 L391.7 519.6 Q393.9 519.9 395.9 520.9 L396.4 521.2 Q398.4 522.2 400.2 521.0 L403.3 518.9 Q405.1 517.7 407.3 517.3 L416.4 515.8 Q418.6 515.5 420.7 515.0 L428.7 513.2"/>
<path d="M610.0 447.8 L609.2 446.8 Q608.3 445.8 606.8 444.3 L603.1 440.7 Q601.6 439.1 603.7 438.5 L607.3 437.5 Q609.4 436.9 609.7 437.2 L610.0 437.5"/>
<path d="M593.7 505.3 L598.3 504.6 Q600.5 504.2 601.0 505.9 L601.0 505.9 Q601.6 507.6 603.8 507.6 L603.9 507.6 Q606.1 507.6 606.6 505.5 L606.7 505.2 Q607.2 503.1 608.6 503.5 L610.0 503.9"/>
<path d="M538.7 459.3 L552.5 466.2 Q554.4 467.2 552.7 468.6 L550.5 470.3 Q548.8 471.7 546.7 471.0 L534.2 467.2"/>
<path d="M627.1 320.0 L617.6 325.7 Q615.7 326.8 616.1 329.0 L618.7 341.5 Q619.1 343.7 617.2 344.8 L612.0 348.1 Q610.1 349.3 610.5 351.5 L613.0 364.0 Q613.5 366.1 614.1 368.3 L618.5 384.2 Q619.1 386.3 619.4 388.5 L622.1 406.6 Q622.5 408.8 622.1 411.0 L620.6 419.0 Q620.2 421.1 622.4 421.1 L636.0 420.8 Q638.2 420.7 638.0 422.9 L637.2 436.9 Q637.0 439.1 634.9 439.4 L631.4 439.9 Q629.2 440.2 628.1 441.6 L628.1 441.6 Q626.9 442.9 624.7 442.8 L617.9 442.6 Q615.7 442.5 614.1 441.0 L610.0 437.5"/>
<path d="M610.0 447.8 L610.1 448.5 Q610.1 449.2 610.1 451.4 L610.1 453.7 Q610.1 455.9 611.9 457.2 L615.0 459.2 Q616.8 460.4 619.0 460.8 L627.0 462.3 Q629.2 462.7 631.3 463.2 L637.1 464.5 Q639.3 464.9 638.9 467.1 L638.5 469.5 Q638.2 471.7 640.1 472.7 L646.4 476.2 Q648.3 477.3 647.4 479.3 L643.6 487.6 Q642.7 489.6 641.7 491.6 L636.9 501.1 Q635.9 503.1 633.7 503.4 L621.3 505.1 Q619.1 505.3 617.7 507.1 L616.0 509.2 Q614.6 511.0 613.3 512.7 L612.5 513.7 Q611.2 515.5 613.0 516.8 L614.0 517.5 Q615.7 518.8 616.0 521.0 L616.6 525.6 Q616.8 527.8 618.8 526.9 L629.4 522.0 Q631.4 521.1 629.7 519.7 L626.4 516.9 Q624.7 515.5 623.7 513.5 L623.4 512.9 Q622.5 511.0 620.3 511.0 L614.6 511.0"/>
<path d="M610.0 503.9 L611.7 504.4 Q613.5 504.9 613.9 507.1 L614.6 511.0"/>
<path d="M732.0 320.0 L735.8 326.1 Q737.0 328.0 738.1 329.8 L742.6 337.3 Q743.7 339.2 743.3 341.4 L741.9 349.4 Q741.5 351.5 743.7 351.5 L750.5 351.5 Q752.7 351.5 754.8 352.2 L761.8 354.3 Q763.9 354.9 765.5 356.5 L769.1 360.1 Q770.6 361.6 771.2 363.8 L771.2 364.0 Q771.8 366.1 772.9 364.2 L775.2 360.2 Q776.3 358.3 776.7 360.4 L777.0 361.7 Q777.4 363.9 776.6 365.9 L776.0 367.5 Q775.1 369.5 773.4 370.9 L770.1 373.7 Q768.4 375.1 766.4 376.1 L765.9 376.4 Q763.9 377.4 762.4 375.8 L762.1 375.5 Q760.5 374.0 758.8 375.3 L757.8 376.0 Q756.1 377.4 756.5 379.5 L756.7 380.8 Q757.2 383.0 758.9 382.4 L758.9 382.4 Q760.5 381.9 760.5 384.1 L760.5 385.3 Q760.5 387.5 758.4 387.8 L754.9 388.3 Q752.7 388.6 750.5 388.8 L742.5 389.5 Q740.3 389.7 740.0 391.9 L739.5 395.4 Q739.2 397.6 740.2 399.5 L742.7 404.6 Q743.7 406.6 742.1 408.1 L739.6 410.6 Q738.1 412.2 738.3 414.4 L739.0 420.1 Q739.2 422.3 739.4 424.5 L740.1 432.4 Q740.3 434.6 738.4 435.7 L734.4 438.0 Q732.5 439.1 730.3 439.6 L724.5 440.9 Q722.4 441.4 721.1 443.2 L715.8 450.8 Q714.5 452.6 712.4 453.1 L703.2 455.4 Q701.0 455.9 700.1 457.9 L697.5 463.0 Q696.6 464.9 696.7 467.1 L697.5 478.5 Q697.7 480.6 696.2 482.3 L686.8 492.5 Q685.3 494.1 683.5 495.4 L671.4 504.1 Q669.6 505.3 671.0 507.0 L673.8 510.4 Q675.2 512.1 673.7 513.6 L666.7 520.6 Q665.1 522.2 663.4 521.1 L663.4 521.1 Q661.7 519.9 661.2 522.1 L659.2 530.0"/>
<path d="M777.4 368.4 L784.2 367.5 Q786.4 367.3 788.4 368.2 L794.5 370.9 Q796.5 371.7 796.8 373.9 L797.3 377.4 Q797.6 379.6 798.6 381.6 L802.2 388.9 Q803.2 390.8 804.0 392.9 L806.9 400.0 Q807.7 402.1 809.2 403.7 L816.3 411.7 Q817.8 413.3 819.1 415.0 L821.2 417.8"/>
<path d="M877.1 320.2 L883.2 314.9 Q884.9 313.5 886.8 312.5 L894.1 308.9 Q896.0 307.9 896.5 305.7 L898.3 298.2"/>
<path d="M877.1 320.2 L890.9 330.0 Q892.7 331.3 890.5 331.8 L885.9 333.0 Q883.7 333.5 884.0 335.7 L884.6 341.4 Q884.9 343.6 885.9 345.5 L890.5 353.9 Q891.6 355.9 892.5 357.9 L895.1 363.9 Q896.0 365.9 898.0 366.9 L900.7 368.3 Q902.7 369.2 904.1 371.0 L910.5 379.3"/>
<path d="M114.0 530.0 L111.2 536.0 Q110.3 538.0 110.7 540.1 L112.1 547.0 Q112.6 549.2 114.7 548.7 L120.5 547.4 Q122.7 546.9 124.8 547.2 L136.2 548.5 Q138.4 548.7 140.6 548.8 L151.9 549.1 Q154.1 549.2 156.3 549.6 L165.4 551.1 Q167.6 551.4 168.8 549.6 L170.8 546.5 Q172.1 544.7 172.1 542.5 L172.1 539.0 Q172.1 536.8 173.9 535.7 L179.2 532.4 Q181.0 531.2 182.0 533.2 L182.3 533.7 Q183.3 535.7 185.4 536.4 L194.7 539.5 Q196.8 540.2 198.3 541.8 L204.2 547.6 Q205.7 549.2 207.6 550.3 L215.1 554.8 Q217.0 555.9 218.7 557.2 L224.2 561.3 Q225.9 562.7 228.1 563.3 L235.1 565.4 Q237.2 566.0 239.3 566.4 L248.5 567.9 Q250.6 568.3 252.8 568.3 L259.6 568.3"/>
<path d="M83.4 532.3 L91.3 532.9 Q93.5 533.0 95.6 533.7 L99.2 535.0 Q101.3 535.7 102.5 537.6 L105.8 542.8 Q106.9 544.7 108.7 546.1 L112.6 549.2"/>
<path d="M83.4 573.9 L88.3 558.0 Q89.0 555.9 90.2 554.1 L92.3 551.0 Q93.5 549.2 95.5 548.4 L100.4 546.6 Q102.5 545.8 104.6 545.3 L106.9 544.7"/>
<path d="M112.6 549.2 L120.7 553.7 Q122.7 554.8 123.4 556.9 L125.3 562.8 Q126.0 564.9 126.2 567.1 L127.0 580.7 Q127.2 582.9 127.3 585.1 L128.1 594.2 Q128.3 596.3 128.8 598.5 L130.0 603.2 Q130.5 605.3 132.7 605.7 L142.9 607.2 Q145.1 607.6 146.3 609.4 L148.4 612.5 Q149.6 614.3 150.5 616.3 L153.2 622.4 Q154.1 624.4 153.2 626.4 L151.6 630.2 Q150.7 632.3 150.5 634.5 L149.9 639.1 Q149.6 641.3 148.1 642.8 L142.2 648.7 Q140.6 650.2 138.4 650.4 L129.3 651.2 Q127.2 651.4 125.0 650.7 L118.0 648.6 Q115.9 648.0 114.0 647.0 L104.4 642.2 Q102.5 641.3 100.6 640.0 L97.5 638.0 Q95.7 636.8 95.5 634.6 L94.8 627.7 Q94.6 625.5 92.7 626.7 L90.9 627.8 Q89.0 628.9 87.1 627.8 L83.4 625.5"/>
<path d="M167.6 551.4 L170.3 560.6 Q170.9 562.7 172.8 563.9 L175.8 565.9 Q177.7 567.2 177.5 569.3 L176.7 580.7 Q176.6 582.9 174.4 583.1 L158.5 584.9 Q156.3 585.1 154.2 585.5 L147.3 586.9 Q145.1 587.4 143.4 588.7 L137.9 592.8 Q136.1 594.1 134.0 594.7 L128.3 596.3"/>
<path d="M154.1 624.4 L160.9 625.3 Q163.1 625.5 165.3 625.4 L176.6 624.6 Q178.8 624.4 181.0 624.3 L194.6 623.4 Q196.8 623.3 198.4 621.9 L202.9 618.0 Q204.6 616.6 203.9 614.5 L203.1 611.9 Q202.4 609.8 202.2 607.6 L201.5 600.8 Q201.3 598.6 203.3 597.9 L205.9 597.0 Q208.0 596.3 210.1 595.9 L217.1 594.5 Q219.2 594.1 221.4 594.0 L235.0 593.1 Q237.2 593.0 239.3 592.4 L248.5 590.1 Q250.6 589.6 251.3 587.5 L254.4 578.2 Q255.1 576.1 256.2 574.2 L258.5 570.2 Q259.6 568.3 260.6 566.3 L265.4 555.7 Q266.4 553.7 267.1 551.6 L272.4 535.6 Q273.1 533.5 271.0 532.7 L263.7 530.0"/>
<path d="M224.5 530.0 L225.7 540.3 Q225.9 542.5 228.0 541.8 L230.6 540.9 Q232.7 540.2 233.7 538.2 L236.2 533.2 Q237.2 531.2 236.0 530.6 L234.7 530.0"/>
<path d="M250.6 589.6 L258.5 607.6"/>
<path d="M196.8 623.3 L203.6 621.6 Q205.7 621.0 207.9 620.5 L217.1 618.2 Q219.2 617.7 220.9 616.2 L226.5 611.3 Q228.2 609.8 230.4 609.7 L239.5 609.4 Q241.7 609.4 243.9 609.1 L256.3 607.8 Q258.5 607.6 260.6 607.0 L268.7 604.8 Q270.9 604.2 272.4 602.6 L276.0 599.0 Q277.6 597.5 279.7 598.0 L279.9 598.1 Q282.1 598.6 283.2 600.5 L290.0 612.4 Q291.1 614.3 291.6 616.4 L293.9 625.6 Q294.4 627.8 296.4 628.7 L302.5 631.4 Q304.5 632.3 303.9 634.4 L299.5 650.4 Q298.9 652.5 297.9 654.4 L292.0 666.2 Q291.1 668.2 289.8 670.0 L283.3 679.8 Q282.1 681.7 280.8 683.5 L275.5 691.1 Q274.2 692.9 272.8 694.6 L263.0 706.4"/>
<path d="M196.8 623.3 L195.0 630.1 Q194.5 632.3 195.1 634.4 L198.4 645.9 Q199.0 648.0 199.6 650.1 L202.5 661.6 Q203.0 663.7 202.5 665.8 L201.8 668.3 Q201.3 670.4 199.4 671.6 L194.1 674.9 Q192.3 676.1 190.2 676.7 L183.1 678.8 Q181.0 679.4 179.6 681.1 L175.7 685.6 Q174.3 687.3 172.7 688.7 L167.0 693.7 Q165.3 695.1 163.2 695.5 L154.0 697.0 Q151.9 697.4 149.7 697.6 L141.7 698.3 Q139.5 698.5 137.3 698.7 L127.1 699.5 Q124.9 699.6 123.6 701.4 L119.5 706.9 Q118.2 708.6 116.5 710.1 L109.7 716.1 Q108.1 717.6 106.0 718.2 L95.6 721.4 Q93.5 722.1 91.3 722.6 L83.4 724.3"/>
<path d="M140.6 650.2 L142.5 661.5 Q142.9 663.7 140.8 664.5 L135.9 666.3 Q133.9 667.1 133.3 669.2 L131.1 677.3 Q130.5 679.4 131.5 681.4 L135.2 688.7 Q136.1 690.6 137.0 692.7 L139.5 698.5"/>
<path d="M174.3 687.3 L178.3 704.2 Q178.8 706.4 179.3 708.5 L182.8 724.4 Q183.3 726.6 183.7 728.7 L185.6 740.0"/>
<path d="M183.3 726.6 L190.2 724.0 Q192.3 723.2 194.5 723.5 L199.1 724.1 Q201.3 724.3 203.3 723.5 L210.4 720.7 Q212.5 719.8 214.6 719.4 L221.5 718.0 Q223.7 717.6 225.9 717.6 L232.7 717.6 Q234.9 717.6 236.8 716.4 L239.8 714.3 Q241.7 713.1 242.7 711.1 L246.3 703.8 Q247.3 701.9 249.5 701.9 L252.9 701.9 Q255.1 701.9 257.0 703.0 L261.1 705.3 Q263.0 706.4 262.3 708.4 L258.1 720.0 Q257.4 722.1 256.3 724.0 L251.8 731.4 Q250.6 733.3 250.2 735.5 L249.2 740.0"/>
<path d="M192.3 723.2 L196.1 735.7 Q196.8 737.8 198.0 738.9 L199.2 740.0"/>
<path d="M195.6 723.2 L198.4 733.4 Q199.0 735.6 199.1 737.8 L199.2 740.0"/>
<path d="M274.2 692.9 L280.2 689.5 Q282.1 688.4 284.1 687.4 L289.1 684.9 Q291.1 683.9 293.3 683.9 L302.3 683.9 Q304.5 683.9 306.7 683.6 L311.3 683.1 Q313.5 682.8 315.6 682.0 L320.4 680.2 Q322.5 679.4 324.6 680.0 L329.3 681.1 Q331.5 681.7 333.7 681.7 L338.3 681.7 Q340.5 681.7 342.3 680.5 L347.6 677.2 Q349.4 676.1 349.7 675.9 L350.0 675.8"/>
<path d="M108.1 717.6 L110.0 731.1 Q110.3 733.3 111.4 735.2 L112.5 737.0 Q113.7 738.9 113.9 739.5 L114.1 740.0"/>
<path d="M83.4 736.7 L95.8 735.7 Q98.0 735.6 100.1 736.0 L113.7 738.9"/>
<path d="M350.0 675.8 L353.7 674.1 Q355.7 673.1 357.8 673.9 L364.9 676.4 Q366.9 677.2 369.1 677.6 L376.0 679.0 Q378.2 679.4 379.8 680.9 L394.5 693.7 Q396.1 695.1 398.1 694.2 L403.1 691.6 Q405.1 690.6 407.0 689.5 L430.9 674.9"/>
<path d="M659.2 530.0 L656.8 538.1 Q656.1 540.2 654.8 542.0 L654.1 542.9 Q652.8 544.7 652.5 546.9 L650.8 559.4 Q650.5 561.5 648.3 561.3 L641.5 560.6 Q639.3 560.4 637.2 559.8 L624.6 556.5 Q622.5 555.9 620.3 555.5 L613.4 554.1 Q611.2 553.7 610.6 553.3 L610.0 552.9"/>
<path d="M639.3 560.4 L635.9 568.3"/>
<path d="M635.9 575.0 L643.9 572.7 Q646.0 572.1 646.6 573.0 L646.6 573.0 Q647.2 573.9 645.1 574.6 L637.0 577.3"/>
<path d="M703.3 699.6 L704.4 698.5 Q705.5 697.4 707.6 696.8 L714.7 694.6 Q716.8 694.0 718.8 693.2 L720.3 692.6 Q722.4 691.8 723.4 689.8 L723.6 689.2 Q724.6 687.3 723.1 685.7 L722.8 685.5 Q721.3 683.9 721.3 681.7 L721.3 681.6 Q721.3 679.4 722.9 678.9 L722.9 678.9 Q724.6 678.3 724.6 676.1 L724.6 673.8 Q724.6 671.6 725.8 669.7 L726.9 667.8 Q728.0 665.9 729.5 664.4 L732.0 661.9 Q733.6 660.3 735.6 659.4 L741.7 656.7 Q743.7 655.8 745.6 654.8 L751.9 651.3 Q753.8 650.2 756.0 650.1 L759.5 649.9 Q761.7 649.8 763.6 650.9 L764.3 651.3 Q766.2 652.5 768.0 651.3 L775.5 646.9 Q777.4 645.7 779.4 644.8 L784.4 642.2 Q786.4 641.3 788.1 639.8 L791.4 637.0 Q793.1 635.6 793.9 633.6 L796.8 626.5 Q797.6 624.4 798.3 622.3 L800.3 616.4 Q801.0 614.3 802.1 612.4 L806.5 605.4 Q807.7 603.5 809.5 604.7 L817.1 609.7 Q818.9 610.9 819.2 613.1 L820.9 630.1 Q821.2 632.3 821.3 634.5 L822.2 654.8 Q822.3 657.0 824.4 657.5 L826.8 658.1"/>
<path d="M753.8 650.2 L753.1 646.8 Q752.7 644.6 751.5 642.8 L749.4 639.7 Q748.2 637.9 746.1 638.4 L745.8 638.5 Q743.7 639.0 741.5 639.3 L736.9 639.9 Q734.7 640.1 733.4 638.4 L732.7 637.4 Q731.4 635.6 733.5 635.0 L741.6 632.5 Q743.7 631.8 743.5 629.6 L742.8 622.1 Q742.6 619.9 744.4 618.6 L753.2 612.2 Q754.9 610.9 756.7 609.7 L764.4 604.3 Q766.2 603.1 767.7 604.7 L770.3 607.5 Q771.8 609.1 773.9 608.4 L791.0 602.7 Q793.1 602.0 794.9 600.7 L808.2 590.9 Q809.9 589.6 810.5 587.5 L810.5 587.3 Q811.1 585.1 813.0 584.0 L816.7 581.7"/>
<path d="M826.8 658.1 L834.7 644.3 Q835.8 642.4 838.0 642.6 L844.8 643.3 Q847.0 643.5 849.1 644.0 L860.6 646.4 Q862.7 646.9 864.8 647.6 L870.0 649.4"/>
<path d="M826.8 658.1 L836.0 662.7 Q838.0 663.7 840.0 664.6 L849.5 668.5 Q851.5 669.3 853.2 670.6 L854.2 671.4 Q856.0 672.7 858.1 673.4 L860.6 674.2 Q862.7 674.9 863.5 677.0 L865.3 681.9 Q866.1 683.9 868.0 683.7 L870.0 683.5"/>
<path d="M703.3 709.7 L712.7 716.3 Q714.5 717.6 715.8 719.4 L724.5 731.5 Q725.7 733.3 727.3 734.8 L732.6 740.0"/>
<path d="M703.3 709.7 L691.9 713.5 Q689.8 714.2 687.8 715.1 L678.4 719.0 Q676.3 719.8 674.1 720.0 L662.8 720.8 Q660.6 721.0 659.0 722.4 L649.9 730.7 Q648.3 732.2 647.2 731.1 L647.2 731.1 Q646.0 729.9 643.9 730.3 L640.3 730.8 Q638.2 731.1 637.0 732.9 L632.6 740.0"/>
<path d="M671.9 698.5 L683.4 692.8 Q685.3 691.8 686.7 693.5 L695.2 704.6 Q696.6 706.4 698.5 707.3 L703.3 709.7"/>
<path d="M870.0 728.6 L866.0 729.5 Q863.8 729.9 863.9 732.1 L864.3 740.0"/>
<path d="M114.1 740.0 L114.2 740.1 Q114.3 740.2 114.7 742.3 L117.7 758.3 Q118.1 760.5 118.1 762.7 L118.1 768.4 Q118.1 770.6 116.5 772.2 L105.7 783.0 Q104.1 784.6 102.6 786.1 L96.8 791.9 Q95.2 793.5 94.0 795.3 L83.8 811.2"/>
<path d="M113.2 740.0 L114.3 740.2"/>
<path d="M118.1 760.5 L128.7 763.6 Q130.8 764.3 132.9 764.8 L138.8 766.3 Q140.9 766.8 142.8 767.9 L151.7 773.3 Q153.6 774.4 155.8 774.8 L165.4 776.6 Q167.6 777.0 169.1 778.5 L169.8 779.2 Q171.4 780.8 171.2 778.6 L170.3 763.9 Q170.1 761.7 172.3 761.3 L179.4 759.7 Q181.5 759.2 183.7 758.6 L188.3 757.3 Q190.4 756.7 189.9 754.5 L187.2 744.8 Q186.6 742.7 186.1 741.3 L185.6 740.0"/>
<path d="M167.6 777.0 L164.5 786.3 Q163.8 788.4 164.9 790.3 L169.0 796.7 Q170.1 798.5 171.1 800.5 L172.9 804.2 Q173.9 806.2 173.4 808.3 L173.2 809.1 Q172.7 811.2 174.7 812.1 L179.5 814.2 Q181.5 815.0 183.7 814.6 L192.1 812.9 Q194.2 812.5 196.4 812.2 L204.8 811.0 Q206.9 810.7 209.1 810.8 L220.0 811.2 Q222.2 811.2 224.1 810.3 L230.4 807.1 Q232.3 806.2 233.9 804.6 L238.4 800.1 Q239.9 798.5 237.9 797.6 L225.4 791.9 Q223.4 790.9 225.6 790.5 L235.2 788.8 Q237.4 788.4 239.6 788.0 L250.5 786.2 Q252.6 785.9 254.0 784.1 L255.1 782.5 Q256.4 780.8 256.0 778.6 L254.3 770.2 Q253.9 768.1 252.9 766.1 L249.8 759.9 Q248.8 757.9 248.6 755.7 L247.8 750.0 Q247.6 747.8 248.0 745.6 L249.2 740.0"/>
<path d="M198.7 740.0 L197.7 741.3 Q196.8 742.7 197.3 744.8 L200.1 755.8 Q200.6 757.9 200.9 760.1 L201.6 765.9 Q201.9 768.1 201.6 770.3 L200.9 776.1 Q200.6 778.2 201.2 780.3 L203.8 788.8 Q204.4 790.9 206.2 792.2 L207.7 793.4 Q209.5 794.7 211.6 794.2 L212.4 794.0 Q214.6 793.5 216.3 794.7 L221.6 798.5 Q223.4 799.8 225.2 801.1 L232.3 806.2"/>
<path d="M198.7 740.0 L202.8 743.7 Q204.4 745.2 205.4 747.2 L208.5 753.4 Q209.5 755.4 211.4 756.5 L220.3 761.9 Q222.2 763.0 224.0 764.2 L230.5 768.2 Q232.3 769.4 234.3 770.3 L238.0 772.2 Q239.9 773.2 242.1 772.6 L242.9 772.4 Q245.0 771.9 247.0 771.0 L253.9 768.1"/>
<path d="M253.9 768.1 L260.7 770.0 Q262.8 770.6 265.0 770.6 L273.3 770.6 Q275.5 770.6 277.4 769.6 L288.7 764.0 Q290.7 763.0 292.9 762.5 L301.3 760.5 Q303.4 760.0 305.6 760.4 L316.5 762.6 Q318.6 763.0 320.7 763.7 L331.8 767.4 Q333.9 768.1 336.0 767.7 L346.9 765.9 Q349.1 765.5 349.6 765.6 L350.0 765.6"/>
<path d="M104.1 784.6 L108.9 789.4 Q110.5 790.9 111.2 793.0 L114.8 804.1 Q115.5 806.2 115.8 808.3 L116.5 814.1 Q116.8 816.3 116.2 818.4 L113.6 826.9 Q113.0 829.0 114.3 830.8 L119.3 837.4 Q120.6 839.2 122.0 840.9 L124.3 843.8 Q125.7 845.5 127.4 844.1 L131.6 840.6 Q133.3 839.2 135.5 838.9 L143.8 838.1 Q146.0 837.9 148.0 838.7 L156.7 842.2 Q158.7 843.0 160.6 841.9 L170.7 836.4 Q172.7 835.4 173.5 833.3 L181.5 815.0"/>
<path d="M83.8 835.4 L90.5 836.3 Q92.7 836.6 94.7 837.6 L98.3 839.5 Q100.3 840.4 101.9 839.0 L113.0 829.0"/>
<path d="M100.3 840.4 L98.1 854.8 Q97.8 856.9 97.1 859.0 L93.4 870.1 Q92.7 872.2 92.3 874.3 L91.8 877.6 Q91.4 879.8 89.5 880.8 L83.8 883.6"/>
<path d="M125.7 845.5 L122.6 854.8 Q121.9 856.9 122.4 859.1 L123.9 865.0 Q124.4 867.1 123.7 869.2 L121.4 875.2 Q120.6 877.2 120.1 879.4 L118.6 885.3 Q118.1 887.4 118.6 889.5 L120.1 895.4 Q120.6 897.6 119.9 899.6 L118.8 903.1 Q118.1 905.2 116.4 906.6 L112.2 910.1 Q110.5 911.5 108.4 912.3 L106.2 913.2 Q104.1 914.1 103.0 916.0 L98.8 923.6 Q97.8 925.5 96.2 927.0 L91.7 931.5 Q90.2 933.1 88.1 933.9 L83.8 935.6"/>
<path d="M172.7 835.4 L172.7 849.7 Q172.7 851.9 172.1 854.0 L169.4 865.0 Q168.9 867.1 171.0 867.5 L179.4 869.2 Q181.5 869.6 183.7 870.1 L190.8 871.7 Q193.0 872.2 192.2 874.2 L189.9 880.3 Q189.2 882.3 188.9 884.5 L188.1 891.6 Q187.9 893.7 189.5 895.2 L197.7 902.4 Q199.3 903.9 201.3 904.9 L210.0 909.3 Q212.0 910.2 214.1 909.7 L220.0 908.2 Q222.2 907.7 224.0 908.9 L228.0 911.6 Q229.8 912.8 230.8 914.8 L231.3 915.9 Q232.3 917.9 234.5 918.1 L240.3 918.9 Q242.5 919.1 244.6 918.6 L250.5 917.1 Q252.6 916.6 253.7 914.7 L256.6 909.6 Q257.7 907.7 259.9 907.7 L265.7 907.7 Q267.9 907.7 269.9 906.9 L274.2 905.2"/>
<path d="M193.0 872.2 L197.9 866.2 Q199.3 864.6 201.3 863.6 L207.5 860.5 Q209.5 859.5 211.7 859.7 L220.0 860.5 Q222.2 860.7 224.3 861.2 L226.4 861.6 Q228.5 862.0 228.2 859.8 L227.5 854.0 Q227.2 851.9 226.1 850.0 L224.6 847.4 Q223.4 845.5 224.6 843.6 L226.1 841.1 Q227.2 839.2 229.2 838.2 L235.4 835.1 Q237.4 834.1 239.4 833.1 L245.6 830.0 Q247.6 829.0 249.5 828.0 L253.2 826.2 Q255.2 825.2 257.3 825.7 L263.2 827.2 Q265.3 827.7 266.8 829.4 L271.5 835.0 Q272.9 836.6 274.3 838.4 L279.2 845.0 Q280.6 846.8 281.7 848.7 L284.5 853.8 Q285.6 855.7 286.9 856.9 L288.2 858.2"/>
<path d="M222.2 811.2 L223.9 815.5 Q224.7 817.6 226.8 818.4 L232.8 820.6 Q234.9 821.4 235.6 823.5 L238.7 832.8"/>
<path d="M228.5 862.0 L235.3 863.9 Q237.4 864.6 239.6 864.4 L250.4 863.5 Q252.6 863.3 254.7 864.0 L258.2 865.1 Q260.2 865.8 262.4 865.3 L268.3 863.8 Q270.4 863.3 272.5 862.7 L286.1 858.8 Q288.2 858.2 290.4 858.2 L296.1 858.2 Q298.3 858.2 300.4 857.4 L302.6 856.5 Q304.7 855.7 305.8 857.6 L307.4 860.1 Q308.5 862.0 309.6 863.9 L315.0 872.8 Q316.1 874.7 317.3 876.5 L325.0 888.1 Q326.3 889.9 324.8 891.6 L315.0 903.5 Q313.6 905.2 312.4 907.1 L307.1 916.0 Q305.9 917.9 304.4 919.4 L299.9 923.9 Q298.3 925.5 296.9 927.2 L292.0 933.1"/>
<path d="M260.2 865.8 L261.3 875.1 Q261.5 877.2 262.4 879.3 L267.0 890.4 Q267.9 892.5 268.8 894.4 L273.2 903.2 Q274.2 905.2 274.8 907.3 L277.4 915.8 Q278.0 917.9 278.5 920.0 L280.6 929.3"/>
<path d="M298.3 858.2 L297.5 854.0 Q297.1 851.9 298.0 849.9 L302.4 841.1 Q303.4 839.2 305.0 840.7 L305.7 841.4 Q307.2 843.0 309.4 842.8 L319.0 841.9 Q321.2 841.7 323.1 840.6 L332.0 835.2 Q333.9 834.1 335.8 833.1 L337.0 832.5 Q338.9 831.5 338.3 829.5 L337.1 826.0 Q336.4 823.9 335.2 822.1 L331.2 815.6 Q330.1 813.8 329.7 811.6 L327.9 800.7 Q327.5 798.5 328.0 796.4 L329.6 789.3 Q330.1 787.1 332.0 786.1 L342.1 780.6 Q344.0 779.5 346.1 778.8 L350.0 777.6"/>
<path d="M326.3 889.9 L331.9 892.8 Q333.9 893.7 335.5 892.3 L342.4 886.3 Q344.0 884.9 346.2 885.2 L350.0 885.9"/>
<path d="M350.0 894.6 L349.5 897.9 Q349.1 900.1 349.6 901.1 L350.0 902.1"/>
<path d="M350.0 942.3 L348.3 942.8 Q346.6 943.3 346.1 941.1 L344.0 931.8"/>
<path d="M292.0 933.1 L295.2 943.7 Q295.8 945.8 297.9 946.5 L301.3 947.6 Q303.4 948.3 305.5 947.6 L308.9 946.5 Q311.0 945.8 312.6 947.3 L317.1 951.9 Q318.6 953.4 320.6 954.4 L326.8 957.5 Q328.8 958.5 330.8 957.5 L333.9 955.9"/>
<path d="M295.8 945.8 L289.3 956.6 Q288.2 958.5 288.0 960.7 L287.1 971.5 Q286.9 973.7 287.1 975.9 L288.2 985.1"/>
<path d="M237.4 926.8 L241.1 922.1 Q242.5 920.4 244.4 919.4 L247.6 917.9"/>
<path d="M232.3 935.6 L231.3 943.6 Q231.1 945.8 231.7 947.9 L234.2 956.4 Q234.9 958.5 235.7 960.5 L236.6 962.8 Q237.4 964.8 239.6 965.2 L242.8 965.7 Q245.0 966.1 246.8 967.4 L253.4 972.4 Q255.2 973.7 256.5 975.5 L261.5 982.1 Q262.8 983.9 264.1 985.1 L265.3 986.4"/>
<path d="M237.4 964.8 L226.9 962.7 Q224.7 962.3 223.8 964.3 L221.8 969.2 Q220.9 971.2 218.7 971.4 L209.1 972.2 Q206.9 972.4 204.8 973.0 L193.8 975.7 Q191.7 976.3 189.9 977.5 L179.0 985.1"/>
<path d="M220.9 971.2 L218.9 979.2 Q218.4 981.3 217.0 983.1 L214.6 986.4"/>
<path d="M83.8 967.4 L88.6 972.2 Q90.2 973.7 91.0 975.8 L95.2 986.4"/>
<path d="M293.3 983.9 L301.3 981.9 Q303.4 981.3 305.6 981.6 L313.6 982.6"/>
<path d="M350.0 765.6 L353.1 764.8 Q355.2 764.3 357.4 763.7 L368.3 761.0 Q370.5 760.5 372.7 760.3 L383.5 759.4 Q385.7 759.2 387.1 760.9 L391.9 766.4 Q393.3 768.1 395.4 768.8 L398.8 769.9 Q400.9 770.6 401.7 772.7 L402.7 774.9 Q403.5 777.0 405.5 776.2 L411.6 773.9 Q413.6 773.2 415.8 772.6 L426.7 769.9 Q428.9 769.4 431.0 768.7 L444.5 764.9 Q446.6 764.3 448.7 763.4 L459.8 758.8 Q461.9 757.9 463.9 757.2 L469.5 755.4"/>
<path d="M350.0 777.6 L350.1 777.3 Q350.2 777.0 352.3 776.8 L363.2 775.9 Q365.4 775.7 367.5 776.2 L378.5 779.0 Q380.6 779.5 382.6 780.5 L388.8 783.6 Q390.8 784.6 392.8 783.8 L398.9 781.5 Q400.9 780.8 402.1 778.9 L403.5 777.0"/>
<path d="M400.9 780.8 L409.4 788.2 Q411.1 789.7 412.7 791.1 L419.6 797.1 Q421.2 798.5 422.5 800.3 L428.9 809.4 Q430.1 811.2 428.9 813.1 L426.3 817.0 Q425.0 818.9 423.3 820.2 L415.4 826.4 Q413.6 827.7 412.6 829.7 L412.1 830.9 Q411.1 832.8 409.3 834.1 L400.2 840.4 Q398.4 841.7 396.6 842.9 L385.0 850.6 Q383.2 851.9 381.4 853.2 L372.2 860.6 Q370.5 862.0 368.9 863.6 L364.4 868.1 Q362.8 869.6 361.9 871.6 L358.8 877.8 Q357.8 879.8 356.2 881.3 L353.0 884.6 Q351.4 886.1 350.7 886.0 L350.0 885.9"/>
<path d="M425.0 818.9 L430.0 824.8 Q431.4 826.5 433.5 827.0 L439.4 828.5 Q441.5 829.0 443.7 829.2 L454.6 830.1 Q456.8 830.3 458.5 831.7 L461.4 834.0 Q463.1 835.4 461.9 837.2 L453.0 850.0 Q451.7 851.9 451.9 854.1 L452.8 864.9 Q453.0 867.1 453.0 869.3 L453.0 875.0 Q453.0 877.2 453.5 879.4 L455.0 885.3 Q455.5 887.4 454.8 889.5 L453.0 895.0"/>
<path d="M463.1 835.4 L472.7 829.0 Q474.6 827.7 476.8 827.7 L480.0 827.7 Q482.2 827.7 481.6 825.6 L480.2 821.0 Q479.6 818.9 480.5 816.9 L485.1 806.9 Q486.0 804.9 488.0 804.1 L490.3 803.2 Q492.3 802.4 491.5 800.3 L490.6 798.0 Q489.8 796.0 489.4 793.8 L487.7 785.5 Q487.2 783.3 486.8 781.2 L485.2 774.0 Q484.7 771.9 486.4 770.5 L490.6 767.0 Q492.3 765.5 494.4 764.7 L503.0 761.3 Q505.0 760.5 507.1 759.7 L513.1 757.4 Q515.2 756.7 516.4 755.4 L517.7 754.1"/>
<path d="M351.4 886.1 L350.0 894.6"/>
<path d="M350.0 902.1 L351.7 905.7 Q352.7 907.7 354.0 909.5 L355.2 911.0 Q356.5 912.8 358.7 912.4 L368.3 910.6 Q370.5 910.2 372.6 910.6 L375.9 911.2 Q378.1 911.5 380.1 912.3 L386.2 914.6 Q388.2 915.3 390.4 915.8 L398.8 917.4 Q400.9 917.9 403.1 917.3 L414.0 914.6 Q416.2 914.1 418.3 914.7 L426.7 917.2 Q428.9 917.9 430.9 917.0 L439.5 913.6 Q441.5 912.8 443.7 912.4 L447.9 911.5"/>
<path d="M441.5 892.5 L452.1 894.6 Q454.2 895.0 456.3 895.8 L464.9 899.3 Q466.9 900.1 469.0 900.7 L477.5 903.3 Q479.6 903.9 480.1 906.1 L480.5 908.1 Q480.9 910.2 482.6 911.7 L488.1 916.4 Q489.8 917.9 491.0 919.7 L493.6 923.7 Q494.9 925.5 495.8 927.4 L501.5 938.7 Q502.5 940.7 503.5 942.6 L509.0 952.7 Q510.1 954.7 512.3 954.3 L515.5 953.8 Q517.7 953.4 518.9 955.2 L521.6 959.2 Q522.8 961.0 524.2 962.7 L527.7 966.9 Q529.1 968.6 531.3 969.0 L540.9 970.8 Q543.1 971.2 545.3 971.6 L553.6 973.3 Q555.8 973.7 557.7 974.8 L560.3 976.4 Q562.1 977.5 562.7 979.7 L562.9 980.5 Q563.4 982.6 565.4 981.8 L576.6 977.1 Q578.6 976.3 579.2 978.4 L579.4 979.2 Q579.9 981.3 582.1 981.7 L591.7 983.5 Q593.9 983.9 596.1 983.9 L604.4 983.9 Q606.6 983.9 608.3 984.4 L610.0 985.0"/>
<path d="M441.5 892.5 L441.5 896.6 Q441.5 898.8 443.0 900.5 L446.5 904.8 Q447.9 906.4 449.1 908.3 L454.3 916.0 Q455.5 917.9 456.5 919.8 L460.9 928.6 Q461.9 930.6 463.0 932.4 L464.5 935.0 Q465.7 936.9 463.8 938.0 L461.2 939.6 Q459.3 940.7 457.8 942.3 L453.3 946.8 Q451.7 948.3 451.0 950.4 L449.9 953.9 Q449.2 955.9 451.1 957.1 L453.6 958.6 Q455.5 959.8 456.5 961.7 L458.3 965.4 Q459.3 967.4 458.9 969.5 L458.5 971.6 Q458.1 973.7 459.4 975.4 L461.8 978.3 Q463.1 980.1 464.3 981.9 L466.9 986.4"/>
<path d="M449.2 955.9 L443.1 962.0 Q441.5 963.6 439.6 962.6 L438.4 962.0 Q436.5 961.0 434.7 962.3 L428.1 967.3 Q426.3 968.6 424.3 969.6 L418.1 972.7 Q416.2 973.7 414.6 975.3 L410.1 979.8 Q408.5 981.3 407.0 982.9 L403.5 986.4"/>
<path d="M356.5 912.8 L356.5 938.5 Q356.5 940.7 354.5 941.5 L352.2 942.4 Q350.2 943.3 350.1 942.8 L350.0 942.3"/>
<path d="M525.3 754.1 L531.7 763.7 Q532.9 765.5 534.5 767.1 L542.8 775.4 Q544.4 777.0 543.7 778.2 L543.7 778.2 Q543.1 779.5 544.9 780.8 L546.4 782.0 Q548.2 783.3 548.8 785.4 L551.4 795.2 Q552.0 797.3 550.3 798.7 L544.8 803.5 Q543.1 804.9 541.7 806.6 L539.4 809.5 Q538.0 811.2 540.2 811.2 L540.9 811.2 Q543.1 811.2 542.1 813.2 L539.0 819.4 Q538.0 821.4 536.1 822.0 L536.1 822.0 Q534.2 822.7 536.1 823.7 L546.2 829.2 Q548.2 830.3 549.4 832.1 L549.5 832.3 Q550.7 834.1 552.9 833.9 L565.0 833.0 Q567.2 832.8 568.3 830.9 L573.8 820.8 Q574.8 818.9 575.5 816.8 L577.9 809.5 Q578.6 807.4 577.4 806.2 L577.4 806.2 Q576.1 804.9 578.1 804.0 L583.0 802.0 Q585.0 801.1 586.3 799.8 L586.3 799.8 Q587.5 798.5 588.8 796.8 L592.6 791.5 Q593.9 789.7 596.0 789.0 L604.5 786.5 Q606.6 785.9 608.3 785.1 L610.0 784.3"/>
<path d="M610.0 775.3 L609.6 774.8 Q609.1 774.4 607.8 772.7 L606.6 771.1 Q605.3 769.4 603.7 767.8 L599.2 763.3 Q597.7 761.7 598.4 759.6 L599.5 756.2 Q600.2 754.1 598.2 755.1 L578.1 764.6 Q576.1 765.5 574.9 763.7 L570.9 757.3 Q569.8 755.4 569.1 753.9 L568.5 752.3"/>
<path d="M600.2 754.1 L607.8 744.4 Q609.1 742.7 609.6 743.0 L610.0 743.3"/>
<path d="M550.7 834.1 L554.2 837.6 Q555.8 839.2 557.6 840.5 L564.2 845.5 Q565.9 846.8 567.8 848.0 L567.9 848.1 Q569.8 849.3 571.5 848.0 L573.1 846.8 Q574.8 845.5 575.6 847.6 L576.6 849.8 Q577.4 851.9 579.5 852.2 L585.4 853.3 Q587.5 853.6 588.6 851.7 L592.8 843.6 Q593.9 841.7 595.7 840.5 L595.8 840.4 Q597.7 839.2 599.6 840.1 L600.8 840.7 Q602.8 841.7 604.1 839.9 L605.2 838.4 Q606.6 836.6 608.3 838.0 L610.0 839.3"/>
<path d="M597.7 839.2 L602.7 832.1 Q604.0 830.3 606.2 830.8 L607.0 831.0 Q609.1 831.5 609.6 830.4 L610.0 829.3"/>
<path d="M610.0 829.0 L608.3 827.7 Q606.6 826.5 606.9 824.3 L607.5 819.8 Q607.8 817.6 606.9 815.6 L606.3 814.5 Q605.3 812.5 607.4 811.7 L610.0 810.8"/>
<path d="M610.0 743.3 L622.2 750.5 Q624.1 751.6 625.4 749.8 L632.6 740.0"/>
<path d="M732.6 740.0 L736.9 744.9 Q738.4 746.5 737.2 748.4 L728.1 763.7 Q726.9 765.5 725.8 767.5 L717.9 781.4 Q716.8 783.3 718.4 784.8 L729.1 794.5 Q730.7 796.0 730.1 798.1 L726.3 811.7 Q725.7 813.8 727.3 815.2 L729.8 817.4 Q731.5 818.9 730.9 821.0 L730.0 824.3 Q729.5 826.5 727.5 827.5 L723.8 829.3 Q721.9 830.3 719.8 831.1 L708.7 835.8 Q706.6 836.6 704.6 837.4 L698.5 839.7 Q696.5 840.4 694.6 841.5 L683.1 848.2 Q681.2 849.3 679.3 850.4 L662.8 859.7 Q660.9 860.7 659.4 859.1 L649.7 848.4 Q648.2 846.8 646.2 847.5 L636.3 851.1 Q634.3 851.9 632.1 851.7 L620.0 850.8 Q617.8 850.6 616.5 848.8 L610.0 839.3"/>
<path d="M716.8 783.3 L697.0 770.5 Q695.2 769.4 694.0 771.2 L690.0 777.6 Q688.9 779.5 688.0 781.5 L687.1 783.8 Q686.3 785.9 684.2 785.4 L682.9 785.1 Q680.7 784.6 681.3 782.5 L683.7 774.0 Q684.3 771.9 683.4 770.0 L683.4 770.0 Q682.5 768.1 681.3 769.9 L678.7 773.9 Q677.4 775.7 675.2 775.7 L670.7 775.7 Q668.5 775.7 668.2 777.9 L666.9 785.0 Q666.5 787.1 664.4 786.7 L661.8 786.3 Q659.7 785.9 659.5 788.0 L659.0 797.6 Q658.9 799.8 661.0 800.6 L663.9 801.6 Q666.0 802.4 665.0 804.3 L660.6 813.1 Q659.7 815.0 661.8 815.5 L663.8 815.9 Q666.0 816.3 667.1 818.2 L671.3 825.8 Q672.4 827.7 673.6 826.5 L673.6 826.5 Q674.9 825.2 677.1 825.0 L687.9 824.1 Q690.1 823.9 690.6 826.1 L691.0 828.1 Q691.4 830.3 692.1 828.2 L693.2 824.8 Q693.9 822.7 695.8 823.0 L695.8 823.0 Q697.7 823.4 698.2 825.6 L699.8 833.2 Q700.3 835.4 702.4 835.8 L706.6 836.6"/>
<path d="M658.9 799.8 L641.5 804.3 Q639.4 804.9 641.2 806.1 L641.3 806.2 Q643.2 807.4 642.2 809.4 L637.8 818.2 Q636.8 820.1 634.7 819.5 L630.0 818.2 Q627.9 817.6 626.1 818.8 L614.5 826.5 Q612.7 827.7 613.8 825.9 L619.2 816.9 Q620.3 815.0 618.5 813.8 L618.3 813.7 Q616.5 812.5 616.5 810.3 L616.5 809.6 Q616.5 807.4 614.5 808.4 L610.0 810.8"/>
<path d="M610.0 829.3 L610.1 829.8 Q610.2 830.3 610.1 829.6 L610.0 829.0"/>
<path d="M634.3 851.9 L637.1 857.5 Q638.1 859.5 636.3 860.7 L632.3 863.3 Q630.5 864.6 631.2 866.6 L633.5 872.6 Q634.3 874.7 632.8 876.4 L628.1 881.9 Q626.7 883.6 628.8 884.1 L634.7 885.6 Q636.8 886.1 637.2 888.3 L637.6 890.3 Q638.1 892.5 639.3 894.3 L641.9 898.3 Q643.2 900.1 641.3 901.2 L638.7 902.8 Q636.8 903.9 638.9 904.7 L641.1 905.6 Q643.2 906.4 643.5 908.6 L644.1 911.9 Q644.4 914.1 642.2 913.8 L636.5 913.1 Q634.3 912.8 632.2 912.1 L630.0 911.4 Q627.9 910.8 627.9 913.0 L627.9 913.1 Q627.9 915.3 629.8 916.5 L633.7 919.2 Q635.5 920.4 636.7 922.3 L640.7 928.7 Q641.9 930.6 642.9 932.5 L644.7 936.2 Q645.7 938.2 643.9 939.4 L643.7 939.5 Q641.9 940.7 639.8 939.9 L637.6 939.0 Q635.5 938.2 636.2 940.1 L636.2 940.1 Q636.8 942.0 638.4 943.5 L639.1 944.2 Q640.6 945.8 641.1 947.9 L641.5 950.0 Q641.9 952.1 643.8 953.3 L646.3 954.8 Q648.2 955.9 650.4 955.5 L658.8 953.8 Q660.9 953.4 662.6 952.0 L666.9 948.5 Q668.5 947.1 670.7 947.6 L676.6 949.1 Q678.7 949.6 680.1 951.3 L684.9 956.8 Q686.3 958.5 687.4 960.4 L692.8 969.3 Q693.9 971.2 695.3 972.9 L698.9 977.1 Q700.3 978.8 702.4 978.1 L709.6 975.7 Q711.7 975.0 713.5 976.2 L717.5 978.8 Q719.3 980.1 721.0 981.5 L726.9 986.4"/>
<path d="M652.0 882.3 L658.7 882.3 Q660.9 882.3 662.5 883.9 L664.5 885.8 Q666.0 887.4 664.1 888.5 L654.7 893.9 Q652.8 895.0 652.7 892.8 L652.0 882.3"/>
<path d="M636.8 884.9 L642.3 884.0 Q644.4 883.6 643.3 885.5 L641.8 888.1 Q640.6 889.9 639.3 888.2 L636.8 884.9"/>
<path d="M610.0 775.3 L610.1 774.8 Q610.2 774.4 610.9 776.5 L612.0 780.0 Q612.7 782.0 611.3 783.2 L610.0 784.3"/>
<path d="M870.0 905.1 L868.3 905.1 Q866.6 905.2 865.7 907.2 L864.8 909.5 Q864.0 911.5 861.8 911.5 L858.6 911.5 Q856.4 911.5 855.4 913.5 L854.9 914.6 Q853.9 916.6 851.7 916.6 L848.5 916.6 Q846.3 916.6 844.9 918.4 L843.8 919.9 Q842.4 921.7 840.4 920.9 L838.1 920.0 Q836.1 919.1 833.9 919.5 L830.7 920.0 Q828.5 920.4 826.9 922.0 L825.0 923.9 Q823.4 925.5 821.3 924.9 L820.5 924.7 Q818.3 924.2 817.5 926.3 L816.6 928.5 Q815.8 930.6 813.8 931.5 L812.7 932.1 Q810.7 933.1 809.5 934.9 L806.9 938.9 Q805.6 940.7 803.9 942.0 L802.3 943.2 Q800.6 944.5 798.4 945.1 L797.6 945.3 Q795.5 945.8 795.0 947.9 L794.6 950.0 Q794.2 952.1 792.2 953.0 L789.9 953.9 Q787.9 954.7 786.1 956.1 L783.2 958.4 Q781.5 959.8 780.0 961.3 L776.7 964.5 Q775.2 966.1 774.0 967.9 L773.9 968.1 Q772.6 969.9 774.8 970.4 L775.6 970.6 Q777.7 971.2 779.0 972.9 L784.0 979.6 Q785.3 981.3 786.9 982.9 L790.4 986.4"/>
<path d="M772.6 969.9 L768.8 975.7 Q767.6 977.5 765.4 977.0 L759.5 975.5 Q757.4 975.0 755.4 976.0 L754.3 976.5 Q752.3 977.5 752.3 979.7 L752.3 986.4"/>
<path d="M738.4 986.4 L740.1 982.1 Q740.9 980.1 743.1 980.1 L743.8 980.1 Q746.0 980.1 746.4 982.2 L747.2 986.4"/>
<path d="M864.3 740.0 L865.3 787.5 Q865.3 789.7 867.2 790.3 L867.2 790.3 Q869.1 790.9 869.6 791.5 L870.0 792.0"/>
<path d="M869.1 790.9 L870.0 795.1"/>
<path d="M838.6 986.4 L859.8 970.0 Q861.5 968.6 861.8 966.5 L862.4 963.2 Q862.8 961.0 864.9 960.6 L866.9 960.2 Q869.1 959.8 869.6 959.8 L870.0 959.8"/>
<path d="M790.4 986.4 L791.7 985.1 Q792.9 983.9 795.0 984.7 L799.3 986.4"/>
<path d="M1044.9 756.8 L1040.6 757.6 Q1038.5 758.0 1037.5 760.0 L1036.9 761.2 Q1035.9 763.1 1033.7 762.9 L1027.9 762.1 Q1025.7 761.9 1024.2 763.4 L1020.9 766.7 Q1019.4 768.2 1020.1 770.3 L1021.2 773.8 Q1021.9 775.9 1019.7 776.2 L1015.2 776.9 Q1013.0 777.2 1012.0 779.1 L1011.4 780.3 Q1010.4 782.3 1008.3 783.0 L1004.9 784.1 Q1002.8 784.8 1001.8 786.8 L999.9 790.5 Q999.0 792.5 996.8 792.0 L994.7 791.6 Q992.6 791.2 991.5 793.1 L989.9 795.7 Q988.8 797.6 986.7 798.4 L984.4 799.3 Q982.4 800.1 982.8 802.3 L983.2 804.3 Q983.7 806.5 981.5 806.2 L976.9 805.5 Q974.7 805.2 973.9 807.3 L973.0 809.5 Q972.2 811.6 970.0 811.2 L966.7 810.7 Q964.5 810.3 962.8 811.6 L961.2 812.8 Q959.4 814.1 957.4 813.4 L953.9 812.3 Q951.8 811.6 950.0 812.9 L948.5 814.1 Q946.7 815.4 944.9 814.1 L943.4 812.9 Q941.6 811.6 940.2 813.3 L937.9 816.2 Q936.5 818.0 937.5 819.9 L938.1 821.1 Q939.0 823.1 936.9 823.5 L934.8 823.9 Q932.7 824.3 930.9 825.6 L925.5 829.4 Q923.7 830.7 923.3 832.9 L922.9 834.9 Q922.5 837.1 923.8 838.8 L925.0 840.4 Q926.3 842.2 925.1 844.0 L922.4 848.0 Q921.2 849.8 919.2 850.7 L916.9 851.6 Q914.8 852.4 913.5 854.1 L912.3 855.7 Q911.0 857.5 908.9 858.2 L905.4 859.3 Q903.3 860.0 902.1 861.9 L899.5 865.9 Q898.2 867.7 896.1 868.2 L895.3 868.4 Q893.1 869.0 893.4 871.1 L894.2 878.2 Q894.4 880.4 893.0 882.2 L890.7 885.1 Q889.3 886.8 887.9 888.5 L885.6 891.5 Q884.2 893.2 882.2 894.0 L879.9 894.9 Q877.8 895.7 877.2 897.8 L876.0 901.3 Q875.3 903.4 873.2 904.1 L870.0 905.1"/>
<path d="M1003.6 740.0 L1004.7 743.2 Q1005.3 745.3 1007.3 746.3 L1016.1 750.7 Q1018.1 751.7 1020.2 752.1 L1036.3 755.1 Q1038.5 755.5 1040.6 755.9 L1044.9 756.8"/>
<path d="M870.0 792.0 L875.7 792.3 Q877.8 792.5 880.0 792.1 L891.0 790.3 Q893.1 789.9 895.2 789.2 L902.5 786.8 Q904.6 786.1 905.3 784.0 L906.5 780.5 Q907.2 778.4 909.1 777.5 L918.0 773.1 Q919.9 772.1 922.1 772.2 L934.3 773.2 Q936.5 773.3 938.7 773.4 L948.3 773.8 Q950.5 773.9 949.9 776.0 L947.3 785.3 Q946.7 787.4 946.0 789.5 L943.6 796.8 Q942.9 798.8 941.9 800.8 L940.0 804.5 Q939.0 806.5 940.4 808.2 L944.1 812.9"/>
<path d="M870.0 795.1 L871.0 799.3 Q871.5 801.4 872.9 803.1 L876.4 807.4 Q877.8 809.0 878.4 811.2 L879.9 817.1 Q880.4 819.2 881.1 821.3 L884.7 831.2 Q885.5 833.3 887.7 832.9 L907.5 829.8 Q909.7 829.4 908.7 831.4 L906.9 835.1 Q905.9 837.1 905.1 839.1 L901.6 847.8 Q900.8 849.8 899.7 851.7 L894.3 860.7 Q893.1 862.6 892.7 864.7 L891.9 869.0"/>
<path d="M936.5 821.8 L947.1 820.7 Q949.2 820.5 951.4 821.1 L956.0 822.5 Q958.2 823.1 959.2 825.0 L963.5 832.6 Q964.5 834.5 965.7 836.4 L971.1 845.4 Q972.2 847.3 973.1 849.3 L975.1 854.2 Q976.0 856.2 977.1 858.1 L978.7 860.7 Q979.8 862.6 981.5 864.0 L985.8 867.6 Q987.5 869.0 989.7 869.0 L994.2 869.0 Q996.4 869.0 996.4 870.2 L996.4 870.2 Q996.4 871.5 994.2 871.5 L987.1 871.5 Q984.9 871.5 984.7 873.7 L983.9 879.5 Q983.7 881.7 982.3 883.4 L979.9 886.4 Q978.6 888.1 978.0 890.2 L974.1 903.8 Q973.5 905.9 972.3 907.8 L968.3 914.3 Q967.1 916.1 965.3 917.4 L958.6 922.5 Q956.9 923.8 955.2 925.2 L949.6 930.0 Q948.0 931.4 946.0 932.3 L938.5 935.6 Q936.5 936.5 934.4 937.3 L925.8 940.8 Q923.7 941.6 921.6 942.1 L913.2 943.7 Q911.0 944.2 908.8 944.6 L900.4 946.3 Q898.2 946.7 896.2 947.5 L887.5 951.0 Q885.5 951.8 883.7 953.0 L879.7 955.7 Q877.8 956.9 875.8 957.7 L870.0 959.8"/>
<path d="M996.4 869.7 L1021.0 871.4 Q1023.2 871.5 1023.7 869.4 L1029.0 849.4 Q1029.6 847.3 1031.6 846.4 L1036.5 844.3 Q1038.5 843.5 1040.0 841.9 L1045.8 836.1 Q1047.4 834.5 1049.1 833.1 L1054.7 828.3 Q1056.3 826.9 1057.9 828.4 L1059.9 830.4 Q1061.4 832.0 1063.6 832.3 L1069.4 833.0 Q1071.6 833.3 1073.8 833.5 L1082.2 834.3 Q1084.4 834.5 1086.2 833.3 L1091.5 829.4 Q1093.3 828.2 1095.1 829.5 L1096.6 830.7 Q1098.4 832.0 1099.4 834.0 L1100.0 835.1 Q1100.9 837.1 1103.1 837.6 L1110.3 839.2 Q1112.4 839.6 1113.6 837.8 L1115.1 835.2 Q1116.2 833.3 1117.8 834.8 L1121.1 838.1 Q1122.6 839.6 1124.4 838.3 L1126.0 837.1 Q1127.7 835.8 1129.1 837.5 L1131.4 840.5 Q1132.8 842.2 1134.0 840.3 L1138.0 833.9 Q1139.2 832.0 1141.0 833.2 L1141.2 833.3 Q1143.0 834.5 1144.4 832.8 L1148.1 828.2"/>
<path d="M1167.2 789.9 L1161.9 800.7 Q1160.9 802.7 1159.4 804.3 L1154.6 809.9 Q1153.2 811.6 1152.1 813.5 L1148.0 819.9 Q1146.8 821.8 1147.3 823.9 L1147.7 826.0 Q1148.1 828.2 1149.2 830.1 L1152.1 835.2 Q1153.2 837.1 1154.4 839.0 L1158.4 845.4 Q1159.6 847.3 1159.0 849.4 L1156.4 857.9 Q1155.8 860.0 1157.0 861.9 L1159.6 865.9 Q1160.9 867.7 1163.0 868.4 L1166.4 869.5 Q1168.5 870.2 1166.7 871.5 L1158.9 876.7 Q1157.0 877.9 1157.7 880.0 L1161.4 891.1 Q1162.1 893.2 1163.4 895.0 L1169.8 904.1 Q1171.1 905.9 1170.5 908.0 L1166.6 921.7 Q1166.0 923.8 1164.6 925.5 L1159.6 932.2 Q1158.3 934.0 1158.7 936.1 L1160.4 944.6 Q1160.9 946.7 1160.0 948.8 L1155.3 960.0 Q1154.5 962.0 1155.7 963.9 L1158.4 967.8 Q1159.6 969.7 1161.1 971.2 L1163.1 973.2 Q1164.7 974.8 1164.0 976.9 L1160.9 986.2"/>
<path d="M948.0 931.4 L953.5 944.7 Q954.3 946.7 955.7 948.4 L963.2 957.8 Q964.5 959.5 966.3 960.8 L973.0 965.8 Q974.7 967.1 976.6 968.3 L985.6 973.6 Q987.5 974.8 988.5 976.7 L992.6 985.0"/>
<path d="M870.0 954.5 L870.1 954.4 Q870.2 954.4 872.2 955.4 L875.3 956.9"/>
<path d="M870.0 649.4 L870.6 649.3 Q871.2 649.2 873.2 650.0 L880.3 652.8 Q882.3 653.6 884.3 654.5 L895.9 659.5 Q897.9 660.3 899.2 662.1 L903.3 667.5 Q904.6 669.2 906.2 670.8 L916.5 681.1 Q918.0 682.6 919.7 684.1 L932.0 694.6 Q933.6 696.0 935.4 697.4 L950.8 709.2 Q952.6 710.5 954.4 709.2 L955.3 708.5 Q957.1 707.2 959.1 708.0 L971.7 713.1 Q973.8 713.9 975.7 715.0 L987.5 721.7 Q989.4 722.8 990.9 724.4 L998.0 732.3 Q999.4 733.9 1000.7 735.8 L1003.6 740.0"/>
<path d="M870.0 683.5 L873.4 683.6 Q875.6 683.7 877.4 685.0 L885.0 690.3 Q886.8 691.6 888.7 692.6 L902.7 700.5 Q904.6 701.6 906.2 703.2 L907.5 704.5 Q909.1 706.1 908.4 708.1 L907.5 710.7 Q906.9 712.8 904.9 713.7 L895.4 718.5 Q893.5 719.4 891.4 720.3 L879.9 725.3 Q877.8 726.1 875.8 726.8 L870.0 728.6"/>
<path d="M1110.2 767.2 L1110.6 765.6 Q1110.9 764.1 1112.7 762.9 L1113.8 762.1 Q1115.6 760.9 1116.8 761.3 L1116.8 761.3 Q1118.0 761.7 1117.2 763.7 L1117.2 763.6 Q1116.4 765.6 1115.2 767.2 L1115.2 767.2 Q1114.1 768.8 1116.3 769.1 L1116.6 769.2 Q1118.8 769.5 1119.5 767.5 L1119.5 767.6 Q1120.3 765.6 1120.1 763.4 L1119.7 760.8 Q1119.5 758.6 1120.7 758.4 L1120.7 758.4 Q1121.9 758.1 1122.0 760.3 L1122.7 770.3"/>
<path d="M873.7 109.0 L874.6 120.3 Q874.8 122.5 875.0 124.7 L875.8 133.8 Q876.0 136.0 878.1 136.5 L878.3 136.5 Q880.4 137.1 880.4 139.3 L880.4 154.0 Q880.4 156.2 879.8 158.3 L877.7 165.3 Q877.1 167.4 876.9 169.6 L876.1 181.0 Q876.0 183.1 877.1 185.0 L879.3 188.8"/>
<path d="M880.0 188.2 L883.2 185.6 Q884.9 184.3 886.9 183.3 L896.5 178.5 Q898.4 177.5 899.2 177.0 L900.0 176.5"/>
<path d="M880.0 216.4 L883.0 218.1 Q884.9 219.1 887.1 218.8 L890.6 218.3 Q892.8 218.0 893.6 220.0 L895.4 224.9 Q896.2 227.0 898.1 227.2 L900.0 227.4"/>
<path d="M896.8 300.5 L897.0 295.6 Q897.1 293.4 898.7 294.9 L900.5 296.4"/>
</g>
<g fill="none" stroke="#4a5258" stroke-width="1.3" stroke-linejoin="round">
<path d="M83.5 48.8 L89.0 53.3 Q90.2 54.2 91.1 55.4 L100.8 68.3 Q101.7 69.5 102.8 70.6 L118.9 86.9 Q120.0 88.0 121.3 88.7 L147.5 103.2 Q148.8 103.9 150.2 104.4 L170.4 111.1 Q171.8 111.6 173.3 111.9 L198.3 116.4 Q199.8 116.7 201.3 116.8 L231.5 119.9 Q233.0 120.0 234.5 120.0 L257.0 120.5 Q258.5 120.5 260.0 120.3 L279.9 116.9 Q281.4 116.7 282.8 116.3 L291.5 114.0 Q292.9 113.6 294.3 114.1 L303.0 117.0 Q304.4 117.5 305.9 117.7 L320.7 119.5 Q322.2 119.7 323.7 120.0 L333.5 122.0 Q335.0 122.3 336.5 122.0 L338.5 121.6 Q340.0 121.3 341.0 122.4 L346.7 128.3 Q347.7 129.4 349.0 130.1 L359.2 135.1 Q360.5 135.8 362.0 136.1 L379.4 139.1 Q380.9 139.4 382.4 139.3 L404.0 138.0 Q405.5 137.9 407.0 137.8 L446.1 134.7 Q447.6 134.6 449.1 134.4 L476.7 129.7 Q478.2 129.5 479.7 129.2 L518.7 121.4 Q520.2 121.1 521.7 120.8 L557.0 112.7 Q558.5 112.4 559.9 111.8 L564.7 109.7 Q566.1 109.1 567.6 109.2 L579.9 109.8 Q581.4 109.9 582.8 110.3 L595.3 113.8 Q596.7 114.2 598.2 114.4 L604.1 115.3 Q605.6 115.5 606.5 116.7 L610.3 121.3 Q611.2 122.5 612.7 122.6 L627.7 123.5 Q629.2 123.6 630.7 123.5 L654.6 122.6 Q656.1 122.5 657.6 122.4 L677.1 121.4 Q678.6 121.3 680.1 121.2 L697.3 119.9 Q698.8 119.8 700.3 119.6 L710.8 118.2 Q712.3 118.0 713.8 117.8 L719.7 117.0 Q721.2 116.8 722.7 116.4 L737.7 112.7 Q739.2 112.3 740.7 112.1 L760.2 109.2 Q761.7 109.0 763.2 108.8 L798.5 104.2 Q800.0 104.0 801.5 103.9 L878.5 100.1 Q880.0 100.0 881.5 100.1 L938.5 102.9 Q940.0 103.0 941.5 103.4 L961.3 108.4 Q962.8 108.8 964.3 108.8 L965.9 108.8 Q967.4 108.8 968.0 110.2 L969.7 114.2 Q970.3 115.6 971.4 116.7 L977.0 122.3 Q978.1 123.4 979.5 123.9 L984.6 125.9 Q986.0 126.4 987.5 126.1 L992.3 125.3 Q993.8 125.0 995.1 125.8 L1002.2 130.5 Q1003.5 131.3 1004.0 132.7 L1006.0 138.6 Q1006.5 140.0 1007.3 141.3 L1010.5 146.6 Q1011.3 147.9 1012.4 148.9 L1018.1 153.7 Q1019.2 154.7 1020.6 155.2 L1023.6 156.2 Q1025.0 156.7 1025.8 155.4 L1028.1 152.1 Q1028.9 150.8 1029.6 152.1 L1030.6 154.4 Q1031.3 155.7 1030.6 157.0 L1028.7 160.2 Q1028.0 161.5 1026.9 162.6 L1024.2 165.3 Q1023.1 166.4 1022.8 167.9 L1021.4 176.6 Q1021.1 178.1 1021.4 179.6 L1022.8 188.4 Q1023.1 189.9 1023.8 191.2 L1028.2 200.3 Q1028.9 201.6 1029.8 202.8 L1033.9 208.2 Q1034.8 209.4 1035.2 210.9 L1036.3 215.7 Q1036.7 217.2 1037.9 218.2 L1041.4 221.1 Q1042.6 222.1 1042.5 223.6 L1041.7 233.3 Q1041.6 234.8 1041.4 236.3 L1039.9 245.0 Q1039.7 246.5 1039.7 248.0 L1039.7 256.7 Q1039.7 258.2 1038.7 259.4 L1035.8 262.9 Q1034.8 264.1 1035.2 265.6 L1036.3 270.4 Q1036.7 271.9 1036.1 273.3 L1033.4 280.3 Q1032.8 281.7 1031.5 282.4 L1026.3 284.9 Q1025.0 285.6 1023.5 286.0 L1018.7 287.1 Q1017.2 287.5 1016.5 288.8 L1015.0 292.1 Q1014.3 293.4 1014.1 294.9 L1013.4 299.7 Q1013.2 301.2 1012.0 302.0 L1004.3 307.1 Q1003.1 307.9 1002.0 308.9 L995.3 314.7 Q994.2 315.7 992.7 316.1 L982.3 318.6 Q980.8 319.0 979.7 320.1 L975.2 324.6 Q974.1 325.7 972.6 326.1 L966.7 327.6 Q965.2 328.0 964.3 329.2 L957.2 337.9 Q956.3 339.1 955.0 339.9 L946.4 345.0 Q945.1 345.8 943.9 346.7 L937.4 351.6 Q936.2 352.5 935.8 353.9 L932.1 365.6 Q931.7 367.0 930.4 367.7 L924.1 370.8 Q922.8 371.5 921.6 372.4 L912.8 379.5 Q911.6 380.4 910.4 381.3 L901.7 387.3 Q900.5 388.2 899.1 388.8 L879.6 397.7 Q878.2 398.3 876.8 398.8 L859.5 404.4 Q858.1 404.9 856.7 405.4 L843.9 410.0 Q842.5 410.5 841.1 411.1 L821.6 418.8 Q820.2 419.4 818.9 420.2 L810.3 425.3 Q809.0 426.1 808.0 427.2 L801.1 435.1 Q800.1 436.2 799.4 437.5 L795.2 446.0 Q794.5 447.3 794.1 448.7 L792.2 456.0 Q791.8 457.4 791.8 458.9 L791.8 490.0 Q791.8 491.5 792.2 493.0 L798.3 518.2 Q798.7 519.7 799.1 521.1 L807.7 553.4 Q808.1 554.8 808.6 556.2 L815.8 576.8 Q816.3 578.2 817.0 579.5 L826.2 595.7 Q826.9 597.0 827.8 598.2 L840.0 613.4 Q840.9 614.6 842.0 615.7 L858.6 632.2 Q859.7 633.3 860.9 634.2 L877.2 646.5 Q878.4 647.4 879.7 648.1 L895.9 656.0 Q897.2 656.7 898.6 657.2 L912.0 661.5 Q913.4 662.0 914.7 662.7 L932.2 672.6 Q933.5 673.3 934.9 673.9 L954.4 682.9 Q955.8 683.5 957.1 684.2 L976.8 694.0 Q978.1 694.7 979.4 695.5 L998.7 708.0 Q1000.0 708.8 1001.2 709.7 L1008.2 714.7 Q1009.4 715.6 1010.6 716.5 L1017.6 721.4 Q1018.8 722.3 1020.3 722.4 L1029.8 723.3 Q1031.3 723.4 1032.8 723.4 L1039.9 723.1 Q1041.4 723.1 1042.7 723.8 L1044.0 724.3 Q1045.3 725.0 1046.5 725.8 L1053.5 730.5 Q1054.7 731.3 1055.8 732.4 L1064.5 741.1 Q1065.6 742.2 1066.7 743.3 L1073.9 750.5 Q1075.0 751.6 1076.2 752.5 L1086.3 759.3 Q1087.5 760.2 1088.8 760.9 L1098.7 765.7 Q1100.0 766.4 1101.5 766.8 L1107.9 768.4 Q1109.4 768.8 1110.9 769.1 L1120.4 770.8 Q1121.9 771.1 1123.3 771.7 L1133.0 776.0 Q1134.4 776.6 1135.8 777.1 L1145.5 780.8 Q1146.9 781.3 1148.4 781.7 L1157.9 784.0 Q1159.4 784.4 1160.8 785.0 L1172.5 789.6"/>
<path d="M315.8 159.5 L320.4 154.0 Q321.4 152.8 322.8 152.3 L330.1 149.9 Q331.5 149.4 333.0 149.3 L343.5 149.0 Q345.0 148.9 346.4 149.4 L352.1 151.6 Q353.5 152.1 355.0 152.0 L367.7 151.3 Q369.2 151.2 370.7 151.0 L394.6 147.4 Q396.1 147.2 397.6 147.2 L412.6 146.7 Q414.1 146.7 415.6 146.3 L423.8 144.2 Q425.3 143.8 426.8 143.7 L437.3 143.2 Q438.8 143.1 440.3 142.9 L447.4 141.7 Q448.9 141.5 450.4 141.6 L464.2 142.6 Q465.7 142.7 467.0 142.0 L477.9 136.6 Q479.2 135.9 480.6 135.5 L495.8 130.7 Q497.2 130.3 498.7 129.9 L515.9 125.5 Q517.4 125.1 518.9 125.2 L524.9 125.7 Q526.4 125.8 527.2 127.1 L528.9 130.1 Q529.7 131.4 528.9 132.7 L527.2 135.7 Q526.4 137.0 525.1 137.8 L520.9 140.7 Q519.6 141.5 518.3 142.2 L514.2 144.2 Q512.9 144.9 511.4 144.7 L505.4 144.0 Q503.9 143.8 502.4 143.8 L498.7 143.8 Q497.2 143.8 495.8 144.3 L489.6 146.7 Q488.2 147.2 487.6 148.6 L485.4 153.6 Q484.8 155.0 483.5 155.8 L476.0 160.3 Q474.7 161.1 473.3 161.7 L467.1 164.5 Q465.7 165.1 464.3 165.5 L453.7 168.8 Q452.3 169.2 450.8 169.4 L440.3 171.2 Q438.8 171.4 437.3 171.6 L420.1 174.3 Q418.6 174.5 417.2 174.1 L408.8 171.8 Q407.4 171.4 406.1 170.7 L397.4 165.8 Q396.1 165.1 394.6 165.1 L384.2 165.1 Q382.7 165.1 381.4 165.9 L370.5 172.2 Q369.2 173.0 367.9 173.8 L359.3 178.9 Q358.0 179.7 356.5 179.4 L350.5 178.3 Q349.0 178.0 348.2 176.7 L346.6 173.8 Q345.8 172.5 345.3 173.9 L343.0 180.1 Q342.5 181.5 341.5 180.4 L337.0 175.2 Q336.0 174.1 334.5 173.7 L328.5 172.3 Q327.0 171.9 325.9 170.8 L322.5 167.3 Q321.4 166.2 320.4 165.0 L316.8 160.7 Q315.8 159.5 316.8 158.3 L321.4 152.8"/>
<path d="M611.2 122.5 L615.0 130.1 Q615.7 131.4 616.2 132.6 L616.2 132.6 Q616.8 133.7 618.3 133.9 L623.2 134.6 Q624.7 134.8 626.2 134.6 L643.4 131.6 Q644.9 131.4 646.4 131.3 L663.6 130.4 Q665.1 130.3 666.6 130.2 L683.8 128.8 Q685.3 128.7 686.8 128.5 L701.8 126.0 Q703.3 125.8 704.8 125.9 L713.0 126.8 Q714.5 126.9 715.2 128.2 L717.2 132.4 Q717.9 133.7 718.1 135.2 L718.8 141.2 Q719.0 142.7 718.5 144.1 L716.1 151.4 Q715.6 152.8 716.0 154.2 L717.5 159.2 Q717.9 160.6 718.6 161.9 L721.7 168.3 Q722.4 169.6 722.2 171.1 L721.4 179.3 Q721.2 180.8 720.7 182.2 L718.4 188.4 Q717.9 189.8 716.9 191.0 L713.3 195.3 Q712.3 196.5 710.8 196.8 L707.0 197.4 Q705.5 197.7 704.2 196.9 L697.9 193.3 Q696.6 192.5 695.2 193.1 L689.0 195.9 Q687.6 196.5 686.2 197.0 L682.2 198.3 Q680.8 198.8 679.4 198.2 L671.0 194.9 Q669.6 194.3 668.1 193.9 L657.6 191.3 Q656.1 190.9 654.6 190.8 L646.4 189.9 Q644.9 189.8 643.6 189.1 L635.0 184.9 Q633.7 184.2 632.5 183.3 L625.9 178.4 Q624.7 177.5 623.6 176.4 L619.1 171.8 Q618.0 170.7 618.8 169.4 L620.5 166.4 Q621.3 165.1 621.5 163.6 L622.3 155.4 Q622.5 153.9 622.2 152.4 L620.5 145.3 Q620.2 143.8 619.3 142.6 L617.7 140.5 Q616.8 139.3 616.6 137.8 L615.9 132.9 Q615.7 131.4 615.0 130.1 L611.9 123.8 Q611.2 122.5 611.9 123.8 L615.7 131.4"/>
<path d="M712.3 118.0 L716.8 126.9"/>
<path d="M716.8 122.0 L725.3 120.7"/>
<path d="M722.4 183.1 L726.2 184.9"/>
<path d="M448.9 134.7 L448.9 141.5"/>
<path d="M478.1 129.2 L479.2 135.9"/>
<path d="M292.6 113.8 L294.2 116.5 L294.2 121.3 L291.5 125.3 L290.6 128.1"/>
<path d="M296.6 121.3 L296.6 114.9 L302.2 115.7 L303.0 118.9 L300.6 122.9 L302.7 128.8"/>
<path d="M291.8 123.7 L290.3 128.1" stroke-width="2.6"/>
<path d="M300.6 123.7 L302.9 128.8" stroke-width="2.6"/>
<path d="M1041.4 723.4 L1044.5 726.6 L1043.8 730.5 L1039.1 732.0 L1035.2 733.6 L1035.9 736.7 L1039.8 737.5 L1043.8 735.2 L1045.3 739.1 L1044.5 745.3 L1046.9 751.6 L1047.7 756.3 L1046.1 759.4" stroke-width="2"/>
</g>
</g>
<g stroke="#3c3c3c" stroke-width="1.1" opacity="0.8"><line x1="468.6" y1="36" x2="468.6" y2="987"/><line x1="878.2" y1="36" x2="878.2" y2="987"/><line x1="83.5" y1="578.1" x2="1172.5" y2="578.1"/></g>
<g>
<rect x="73.5" y="25.5" width="1108.7" height="971.5" fill="none" stroke="#222" stroke-width="1.1"/>
<rect x="83.5" y="36" width="1089" height="951" fill="none" stroke="#222" stroke-width="1.1"/>
<rect x="83.5" y="25.5" width="385.1" height="10.5" fill="#000"/>
<rect x="878.2" y="25.5" width="294.3" height="10.5" fill="#000"/>
<rect x="83.5" y="987" width="385.1" height="10" fill="#000"/>
<rect x="878.2" y="987" width="294.3" height="10" fill="#000"/>
<rect x="73.5" y="578.1" width="10" height="408.9" fill="#000"/>
<rect x="1172.5" y="578.1" width="9.7" height="408.9" fill="#000"/>
<g stroke="#222" stroke-width="1.1"><line x1="83.5" y1="25.5" x2="83.5" y2="36"/><line x1="1172.5" y1="25.5" x2="1172.5" y2="36"/><line x1="83.5" y1="987" x2="83.5" y2="997"/><line x1="1172.5" y1="987" x2="1172.5" y2="997"/><line x1="73.5" y1="36" x2="83.5" y2="36"/><line x1="73.5" y1="987" x2="83.5" y2="987"/><line x1="1172.5" y1="36" x2="1182.2" y2="36"/><line x1="1172.5" y1="987" x2="1182.2" y2="987"/></g>
</g>
<g font-size="22.6px" stroke="#000" stroke-width="0.3">
<text x="437.1" y="16.7" textLength="64.8" lengthAdjust="spacingAndGlyphs">15°30'</text>
<text x="846.7" y="16.7" textLength="64.8" lengthAdjust="spacingAndGlyphs">16°00'</text>
<text x="437.1" y="1023.1" textLength="64.8" lengthAdjust="spacingAndGlyphs">15°30'</text>
<text x="846.7" y="1023.1" textLength="64.8" lengthAdjust="spacingAndGlyphs">16°00'</text>
<text x="-0.4" y="586.3" textLength="64.8" lengthAdjust="spacingAndGlyphs">41°30'</text>
<text x="1192.3" y="586.3" textLength="64.8" lengthAdjust="spacingAndGlyphs">41°30'</text>
</g>
<path d="M619.4 556.7 L623.5 569.3 L636.7 569.3 L626.0 577.0 L630.1 589.6 L619.4 581.9 L608.7 589.6 L612.8 577.0 L602.1 569.3 L615.3 569.3Z" fill="none" stroke="#000" stroke-width="4.2" stroke-miterlimit="10"/>
<rect x="543.5" y="46.6" width="611.6" height="61.3" fill="#fff" stroke="#000" stroke-width="1.1"/>
<g font-size="12.2px">
<text x="548.3" y="60.1">Terremoto del 21-12-2020 19:31:57 (ora locale) ML=3.3 Prof=10 km</text>
<text x="548.3" y="75">Agitazione degli animali</text>
<text x="548.3" y="90">Dati non verificati estratti da 17 questionari compilati tramite Internet, relativi a comuni con almeno 3 questionari.</text>
<text x="548.3" y="105.2">Aggiornato il: 16-12-2025 00:41 (ora locale)</text>
</g>
<rect x="1052.2" y="171.4" width="101.6" height="327.9" fill="#fff" stroke="#000" stroke-width="1.1"/>
<g class="dj" font-size="11.6px">
<text class="dj" x="1061.7" y="192" textLength="85.5" lengthAdjust="spacing">Percentuale</text>
<text class="dj" x="1067.3" y="207.8" textLength="69.5" lengthAdjust="spacing">di animali</text>
<text class="dj" x="1062.5" y="223.7" textLength="79.5" lengthAdjust="spacing">che si sono</text>
<text class="dj" x="1076.6" y="239.5" textLength="46.1" lengthAdjust="spacing">agitati</text>
<rect x="1062" y="255.3" width="80" height="36.2" fill="#dcffdc"/>
<rect x="1062" y="298.9" width="80" height="36.7" fill="#b4ffb4"/>
<rect x="1062" y="344.1" width="80" height="36.7" fill="#4dff4d"/>
<rect x="1061" y="386.3" width="81" height="37.4" fill="#00b414"/>
<text class="dj" x="1075.4" y="277.7" textLength="53.1" lengthAdjust="spacing">0 - 24%</text>
<text class="dj" x="1070.8" y="321.7" textLength="61.5" lengthAdjust="spacing">25 - 49%</text>
<text class="dj" x="1070.8" y="366.6" textLength="61.5" lengthAdjust="spacing">50 - 74%</text>
<text class="dj" x="1066.6" y="409" textLength="69.8" lengthAdjust="spacing" style="fill:#fff">75 - 100%</text>
<line x1="1052.2" y1="434.4" x2="1153.8" y2="434.4" stroke="#000" stroke-width="1" stroke-dasharray="2.6 2.6"/>
<text class="dj" x="1068.7" y="451" textLength="67.7" lengthAdjust="spacing">Epicentro</text>
<text class="dj" x="1058.5" y="466.8" textLength="87.6" lengthAdjust="spacing">strumentale</text>
</g>
<path d="M1100.8 480.4 L1102.7 486.3 L1109.0 486.3 L1103.9 490.0 L1105.9 496.0 L1100.8 492.3 L1095.7 496.0 L1097.7 490.0 L1092.6 486.3 L1098.9 486.3Z" fill="none" stroke="#000" stroke-width="1.2"/>
<g>
<rect x="147.6" y="929.7" width="196.6" height="5" fill="#fff" stroke="#000" stroke-width="1"/>
<rect x="147.6" y="929.7" width="49.5" height="5" fill="#000"/>
<rect x="245.5" y="929.7" width="49.6" height="5" fill="#000"/>
<g stroke="#000" stroke-width="1.2"><line x1="147.6" y1="929.2" x2="147.6" y2="939.5"/><line x1="245.5" y1="929.2" x2="245.5" y2="939.5"/><line x1="344.2" y1="929.2" x2="344.2" y2="939.5"/><line x1="197.1" y1="929.2" x2="197.1" y2="937.3"/><line x1="295.1" y1="929.2" x2="295.1" y2="937.3"/></g>
<g font-size="22.4px" stroke="#000" stroke-width="0.3"><text x="141.4" y="963.4" textLength="12.9" lengthAdjust="spacingAndGlyphs">0</text><text x="233.6" y="963.4" textLength="25.9" lengthAdjust="spacingAndGlyphs">10</text><text x="331.8" y="963.4" textLength="25.9" lengthAdjust="spacingAndGlyphs">20</text></g>
<text x="224.4" y="913.8" font-size="30px" stroke="#000" stroke-width="0.35" textLength="43.5" lengthAdjust="spacingAndGlyphs">km</text>
</g>
<g>
<defs>
<clipPath id="gb0"><path d="M119.40 63.44 a15.90 10.99 0 1 0 31.79 0 a15.90 10.99 0 1 0 -31.79 0Z"/></clipPath>
<clipPath id="gb1"><path clip-rule="evenodd" d="M108.55 68.94 a26.01 20.88 0 1 0 52.01 0 a26.01 20.88 0 1 0 -52.01 0Z M119.40 63.44 a15.90 10.99 0 1 0 31.79 0 a15.90 10.99 0 1 0 -31.79 0Z"/></clipPath>
<clipPath id="gb2"><path clip-rule="evenodd" d="M102.69 74.43 a31.14 28.57 0 1 0 62.27 0 a31.14 28.57 0 1 0 -62.27 0Z M108.55 68.94 a26.01 20.88 0 1 0 52.01 0 a26.01 20.88 0 1 0 -52.01 0Z"/></clipPath>
<clipPath id="gb3"><path clip-rule="evenodd" d="M92.1 37.900000000000006h80v80h-80Z M102.69 74.43 a31.14 28.57 0 1 0 62.27 0 a31.14 28.57 0 1 0 -62.27 0Z"/></clipPath>
</defs>
<circle cx="132.1" cy="77.9" r="29.9" fill="url(#gl)"/>
<g clip-path="url(#globeclip)">
<g clip-path="url(#gb0)">
<path d="M135.15 61.39 L135.11 64.57 L135.06 67.58 L135.00 70.42 L134.94 73.10 L134.86 75.60 L134.78 77.94 L134.69 80.12 L134.60 82.12 L134.46 84.21 L134.26 86.61 L133.99 89.34 L133.65 92.38 L133.25 95.75 L132.78 99.43 L132.24 103.44 L131.63 107.77 L131.50 116.71 L150.99 122.00 L160.83 104.81 L154.19 98.61 L153.16 95.17 L152.20 92.00 L151.30 89.10 L150.46 86.47 L149.68 84.11 L148.97 82.02 L148.33 80.20 L147.75 78.64 L147.07 77.13 L146.14 75.44 L144.95 73.56 L143.50 71.49 L141.79 69.24 L139.84 66.81 L137.62 64.19 L135.15 61.39Z" fill="#f3e21a"/>
<path d="M135.15 61.39 L137.62 64.19 L139.84 66.81 L141.79 69.24 L143.50 71.49 L144.95 73.56 L146.14 75.44 L147.07 77.13 L147.75 78.64 L148.33 80.20 L148.97 82.02 L149.68 84.11 L150.46 86.47 L151.30 89.10 L152.20 92.00 L153.16 95.17 L154.19 98.61 L160.83 104.81 L177.98 91.77 L171.02 71.47 L162.03 72.97 L161.37 72.57 L160.65 72.13 L159.88 71.64 L159.06 71.09 L158.18 70.49 L157.26 69.84 L156.28 69.14 L155.26 68.39 L154.02 67.60 L152.42 66.78 L150.45 65.94 L148.12 65.08 L145.43 64.20 L142.36 63.29 L138.94 62.35 L135.15 61.39Z" fill="#27983a"/>
<path d="M135.15 61.39 L138.94 62.35 L142.36 63.29 L145.43 64.20 L148.12 65.08 L150.45 65.94 L152.42 66.78 L154.02 67.60 L155.26 68.39 L156.28 69.14 L157.26 69.84 L158.18 70.49 L159.06 71.09 L159.88 71.64 L160.65 72.13 L161.37 72.57 L162.03 72.97 L171.02 71.47 L174.08 54.85 L159.12 48.14 L152.88 55.02 L152.33 55.38 L151.78 55.72 L151.23 56.04 L150.68 56.35 L150.13 56.64 L149.58 56.91 L149.03 57.16 L148.48 57.40 L147.79 57.66 L146.82 57.99 L145.57 58.39 L144.05 58.86 L142.24 59.39 L140.16 59.99 L137.79 60.66 L135.15 61.39Z" fill="#e1061f"/>
<path d="M135.15 61.39 L137.79 60.66 L140.16 59.99 L142.24 59.39 L144.05 58.86 L145.57 58.39 L146.82 57.99 L147.79 57.66 L148.48 57.40 L149.03 57.16 L149.58 56.91 L150.13 56.64 L150.68 56.35 L151.23 56.04 L151.78 55.72 L152.33 55.38 L152.88 55.02 L159.12 48.14 L156.49 36.70 L144.83 40.52 L141.89 49.16 L141.14 50.55 L140.37 51.98 L139.57 53.45 L138.74 54.96 L137.88 56.51 L137.00 58.10 L136.09 59.73 L135.15 61.39Z" fill="#27983a"/>
</g>
<g clip-path="url(#gb1)">
<path d="M135.15 61.39 L135.11 64.57 L135.06 67.58 L135.00 70.42 L134.94 73.10 L134.86 75.60 L134.78 77.94 L134.69 80.12 L134.60 82.12 L134.46 84.21 L134.26 86.61 L133.99 89.34 L133.65 92.38 L133.25 95.75 L132.78 99.43 L132.24 103.44 L131.63 107.77 L131.50 116.71 L150.99 122.00 L160.83 104.81 L154.19 98.61 L153.16 95.17 L152.20 92.00 L151.30 89.10 L150.46 86.47 L149.68 84.11 L148.97 82.02 L148.33 80.20 L147.75 78.64 L147.07 77.13 L146.14 75.44 L144.95 73.56 L143.50 71.49 L141.79 69.24 L139.84 66.81 L137.62 64.19 L135.15 61.39Z" fill="#e1061f"/>
<path d="M135.15 61.39 L137.62 64.19 L139.84 66.81 L141.79 69.24 L143.50 71.49 L144.95 73.56 L146.14 75.44 L147.07 77.13 L147.75 78.64 L148.33 80.20 L148.97 82.02 L149.68 84.11 L150.46 86.47 L151.30 89.10 L152.20 92.00 L153.16 95.17 L154.19 98.61 L160.83 104.81 L177.98 91.77 L171.02 71.47 L162.03 72.97 L161.37 72.57 L160.65 72.13 L159.88 71.64 L159.06 71.09 L158.18 70.49 L157.26 69.84 L156.28 69.14 L155.26 68.39 L154.02 67.60 L152.42 66.78 L150.45 65.94 L148.12 65.08 L145.43 64.20 L142.36 63.29 L138.94 62.35 L135.15 61.39Z" fill="#f3e21a"/>
<path d="M135.15 61.39 L138.94 62.35 L142.36 63.29 L145.43 64.20 L148.12 65.08 L150.45 65.94 L152.42 66.78 L154.02 67.60 L155.26 68.39 L156.28 69.14 L157.26 69.84 L158.18 70.49 L159.06 71.09 L159.88 71.64 L160.65 72.13 L161.37 72.57 L162.03 72.97 L171.02 71.47 L174.08 54.85 L159.12 48.14 L152.88 55.02 L152.33 55.38 L151.78 55.72 L151.23 56.04 L150.68 56.35 L150.13 56.64 L149.58 56.91 L149.03 57.16 L148.48 57.40 L147.79 57.66 L146.82 57.99 L145.57 58.39 L144.05 58.86 L142.24 59.39 L140.16 59.99 L137.79 60.66 L135.15 61.39Z" fill="#cfc0d6"/>
<path d="M135.15 61.39 L137.79 60.66 L140.16 59.99 L142.24 59.39 L144.05 58.86 L145.57 58.39 L146.82 57.99 L147.79 57.66 L148.48 57.40 L149.03 57.16 L149.58 56.91 L150.13 56.64 L150.68 56.35 L151.23 56.04 L151.78 55.72 L152.33 55.38 L152.88 55.02 L159.12 48.14 L156.49 36.70 L144.83 40.52 L141.89 49.16 L141.14 50.55 L140.37 51.98 L139.57 53.45 L138.74 54.96 L137.88 56.51 L137.00 58.10 L136.09 59.73 L135.15 61.39Z" fill="#27983a"/>
</g>
<g clip-path="url(#gb2)">
<path d="M135.15 61.39 L135.11 64.57 L135.06 67.58 L135.00 70.42 L134.94 73.10 L134.86 75.60 L134.78 77.94 L134.69 80.12 L134.60 82.12 L134.46 84.21 L134.26 86.61 L133.99 89.34 L133.65 92.38 L133.25 95.75 L132.78 99.43 L132.24 103.44 L131.63 107.77 L131.50 116.71 L150.99 122.00 L160.83 104.81 L154.19 98.61 L153.16 95.17 L152.20 92.00 L151.30 89.10 L150.46 86.47 L149.68 84.11 L148.97 82.02 L148.33 80.20 L147.75 78.64 L147.07 77.13 L146.14 75.44 L144.95 73.56 L143.50 71.49 L141.79 69.24 L139.84 66.81 L137.62 64.19 L135.15 61.39Z" fill="#27983a"/>
<path d="M135.15 61.39 L137.62 64.19 L139.84 66.81 L141.79 69.24 L143.50 71.49 L144.95 73.56 L146.14 75.44 L147.07 77.13 L147.75 78.64 L148.33 80.20 L148.97 82.02 L149.68 84.11 L150.46 86.47 L151.30 89.10 L152.20 92.00 L153.16 95.17 L154.19 98.61 L160.83 104.81 L177.98 91.77 L171.02 71.47 L162.03 72.97 L161.37 72.57 L160.65 72.13 L159.88 71.64 L159.06 71.09 L158.18 70.49 L157.26 69.84 L156.28 69.14 L155.26 68.39 L154.02 67.60 L152.42 66.78 L150.45 65.94 L148.12 65.08 L145.43 64.20 L142.36 63.29 L138.94 62.35 L135.15 61.39Z" fill="#cfc0d6"/>
<path d="M135.15 61.39 L138.94 62.35 L142.36 63.29 L145.43 64.20 L148.12 65.08 L150.45 65.94 L152.42 66.78 L154.02 67.60 L155.26 68.39 L156.28 69.14 L157.26 69.84 L158.18 70.49 L159.06 71.09 L159.88 71.64 L160.65 72.13 L161.37 72.57 L162.03 72.97 L171.02 71.47 L174.08 54.85 L159.12 48.14 L152.88 55.02 L152.33 55.38 L151.78 55.72 L151.23 56.04 L150.68 56.35 L150.13 56.64 L149.58 56.91 L149.03 57.16 L148.48 57.40 L147.79 57.66 L146.82 57.99 L145.57 58.39 L144.05 58.86 L142.24 59.39 L140.16 59.99 L137.79 60.66 L135.15 61.39Z" fill="#27983a"/>
</g>
<g clip-path="url(#gb3)">
<path d="M135.15 61.39 L135.11 64.57 L135.06 67.58 L135.00 70.42 L134.94 73.10 L134.86 75.60 L134.78 77.94 L134.69 80.12 L134.60 82.12 L134.46 84.21 L134.26 86.61 L133.99 89.34 L133.65 92.38 L133.25 95.75 L132.78 99.43 L132.24 103.44 L131.63 107.77 L131.50 116.71 L150.99 122.00 L160.83 104.81 L154.19 98.61 L153.16 95.17 L152.20 92.00 L151.30 89.10 L150.46 86.47 L149.68 84.11 L148.97 82.02 L148.33 80.20 L147.75 78.64 L147.07 77.13 L146.14 75.44 L144.95 73.56 L143.50 71.49 L141.79 69.24 L139.84 66.81 L137.62 64.19 L135.15 61.39Z" fill="#1d8a3a"/>
<path d="M135.15 61.39 L137.62 64.19 L139.84 66.81 L141.79 69.24 L143.50 71.49 L144.95 73.56 L146.14 75.44 L147.07 77.13 L147.75 78.64 L148.33 80.20 L148.97 82.02 L149.68 84.11 L150.46 86.47 L151.30 89.10 L152.20 92.00 L153.16 95.17 L154.19 98.61 L160.83 104.81 L177.98 91.77 L171.02 71.47 L162.03 72.97 L161.37 72.57 L160.65 72.13 L159.88 71.64 L159.06 71.09 L158.18 70.49 L157.26 69.84 L156.28 69.14 L155.26 68.39 L154.02 67.60 L152.42 66.78 L150.45 65.94 L148.12 65.08 L145.43 64.20 L142.36 63.29 L138.94 62.35 L135.15 61.39Z" fill="#e1061f"/>
</g>
<g fill="none" stroke="#fff" stroke-width="0.75" stroke-linecap="round">
<path d="M135.15 61.39 Q135.00 74.43 134.60 82.12 Q134.19 89.82 131.63 107.77"/>
<path d="M135.15 61.39 Q145.55 72.97 147.75 78.64 Q149.95 84.32 154.19 98.61"/>
<path d="M135.15 61.39 Q151.04 65.27 155.26 68.39 Q159.47 71.50 162.03 72.97"/>
<path d="M135.15 61.39 Q146.28 58.32 148.48 57.40 Q150.68 56.48 152.88 55.02"/>
<path d="M135.15 61.39 Q138.96 54.65 141.89 49.16"/>
<path d="M135.15 61.39 Q131.63 54.29 127.82 47.91"/>
<path d="M135.15 61.39 Q119.18 64.91 113.86 67.84 Q108.55 70.77 102.33 78.46"/>
<path d="M135.15 61.39 Q125.04 71.50 121.01 78.10 Q116.98 84.69 112.22 100.07"/>
<path d="M119.40 63.44 a15.90 10.99 0 1 0 31.79 0 a15.90 10.99 0 1 0 -31.79 0Z"/>
<path d="M108.55 68.94 a26.01 20.88 0 1 0 52.01 0 a26.01 20.88 0 1 0 -52.01 0Z"/>
<path d="M102.69 74.43 a31.14 28.57 0 1 0 62.27 0 a31.14 28.57 0 1 0 -62.27 0Z"/>
</g>
<circle cx="132.1" cy="77.9" r="29.9" fill="url(#gsh)"/>
</g>
<g font-weight="bold" font-size="13.4px" style="fill:#3f3f3f">
<text x="169.9" y="75" textLength="88.9" lengthAdjust="spacingAndGlyphs" style="fill:#3f3f3f">ISTITUTO NAZIONALE</text>
<text x="169.9" y="89.2" textLength="135.4" lengthAdjust="spacingAndGlyphs" style="fill:#3f3f3f">DI GEOFISICA E VULCANOLOGIA</text>
</g></g>
<g>
<circle cx="1095.5" cy="916.2" r="33.3" fill="#1d1d1b"/>
<circle cx="1095.5" cy="916.2" r="18.7" fill="none" stroke="#e2001a" stroke-width="6.6"/>
<circle cx="1095.5" cy="916.2" r="8" fill="#e2001a"/>
<path d="M1100.5 912.6 L1128.9 900.9 Q1131.5 900.6 1131.5 903.2 L1131.5 931.7 Q1131.5 934.5 1128.7 933.6 L1100.5 922.2 Z" fill="url(#bl)"/>
<path d="M1100.5 922.2 L1128.7 933.6 Q1131.5 934.5 1131.5 931.7 L1131.5 928.7 Q1131.3 931.2 1128.5 930.6 Z" fill="#1462a8" opacity="0.8"/>
<circle cx="1144.5" cy="916.9" r="9.6" fill="#e2001a"/>
<text x="0" y="0" transform="translate(1139.2,917.0) rotate(90)" text-anchor="middle" font-weight="bold" font-size="15.5px" style="fill:#fff">?</text>
<path id="hsitc" d="M1129.44 936.60 A39.6 39.6 0 0 1 1061.56 895.80 A39.6 39.6 0 0 1 1129.44 936.60" fill="none"/>
<text font-size="19.5px" textLength="209" lengthAdjust="spacingAndGlyphs"><textPath href="#hsitc" startOffset="0" textLength="209" lengthAdjust="spacingAndGlyphs"><tspan font-weight="bold" style="fill:#e2001a">www.</tspan><tspan style="fill:#1d1d1b">hai</tspan><tspan font-weight="bold" style="fill:#1d1d1b">sentito</tspan><tspan style="fill:#1d1d1b">il</tspan><tspan font-weight="bold" style="fill:#1d1d1b">terremoto</tspan><tspan font-weight="bold" style="fill:#e2001a">.it</tspan></textPath></text>
</g>
</svg></body></html>
